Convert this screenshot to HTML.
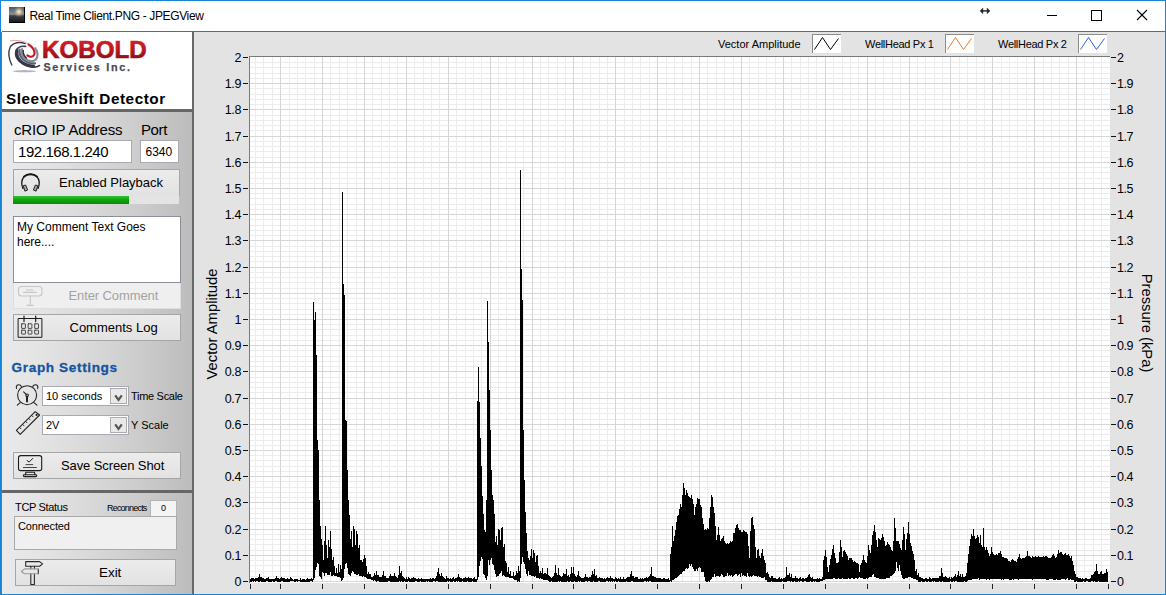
<!DOCTYPE html>
<html><head><meta charset="utf-8"><title>Real Time Client</title>
<style>
*{box-sizing:border-box;margin:0;padding:0}
html,body{width:1166px;height:595px;overflow:hidden;background:#fff}
body{position:relative;font-family:"Liberation Sans",sans-serif;color:#000}
.abs{position:absolute}
#win{position:absolute;left:0;top:0;width:1166px;height:595px;border:1px solid #1883d7}
#win2{position:absolute;left:1px;top:32px;width:1px;height:562px;background:#3c7fca}
#title{position:absolute;left:29.5px;top:9px;font-size:12px;line-height:15px;letter-spacing:-0.36px;white-space:nowrap;color:#000}
#tline{position:absolute;left:2px;top:31px;width:1163px;height:1px;background:#696969}
#lp{position:absolute;left:2px;top:32px;width:190px;height:562px;background:linear-gradient(90deg,#eaeaea 0%,#e3e3e3 22%,#d8d8d8 48%,#cbcbcb 74%,#bcbcbc 100%)}
#hdr{position:absolute;left:2px;top:32px;width:190px;height:77px;background:#fff}
.hsep{position:absolute;left:2px;width:190px;height:3px;background:#666}
#vsep{position:absolute;left:192px;top:32px;width:2px;height:562px;background:#686868}
#ga{position:absolute;left:194px;top:32px;width:971px;height:562px;background:#e3e3e3}
.t{position:absolute;white-space:nowrap;line-height:1}
.inp{position:absolute;background:#fff;border:1px solid #a9a9b4}
.btn{position:absolute;border:1px solid #a6a6a6;background:linear-gradient(180deg,#ececec,#e2e2e2)}
.yl{position:absolute;left:200px;width:41px;text-align:right;letter-spacing:-0.4px;font-size:12.5px;line-height:16px;height:16px}
.yr{position:absolute;left:1117px;width:41px;text-align:left;letter-spacing:-0.4px;font-size:12.5px;line-height:16px;height:16px}
.tk{position:absolute;width:5px;height:1px;background:#111}
.bt{position:absolute;top:584px;width:1px;height:5px;background:#222}
.lg{position:absolute;top:34px;width:29px;height:19px;background:#fff;border-top:1px solid #8c8c8c;border-left:1px solid #8c8c8c}
</style></head><body>
<div id="win"></div><div id="win2"></div>
<!-- title bar -->
<svg class="abs" style="left:9px;top:7px" width="16" height="16" viewBox="0 0 16 16">
<defs><linearGradient id="sky" x1="0" y1="0" x2="0" y2="1"><stop offset="0" stop-color="#4b5a68"/><stop offset="0.45" stop-color="#8a8f92"/><stop offset="0.55" stop-color="#3a4048"/><stop offset="1" stop-color="#15161c"/></linearGradient>
<radialGradient id="sun" cx="0.62" cy="0.3" r="0.35"><stop offset="0" stop-color="#fff8d8"/><stop offset="0.4" stop-color="#d8c898" stop-opacity="0.8"/><stop offset="1" stop-color="#888" stop-opacity="0"/></radialGradient></defs>
<rect width="16" height="16" fill="url(#sky)"/><rect width="16" height="16" fill="url(#sun)"/><rect x="15" y="0" width="1" height="16" fill="#000"/><rect x="0" y="15" width="16" height="1" fill="#000"/></svg>
<div id="title">Real Time Client.PNG - JPEGView</div>
<svg class="abs" style="left:976px;top:4px" width="190" height="24" viewBox="976 4 190 24" fill="none" stroke="#000" stroke-width="1">
<path d="M980 10.9L982.9 8V13.8ZM990 10.9L987.1 8V13.8Z" fill="#222" stroke="#222" stroke-width="0.4"/><rect x="982" y="10.2" width="6" height="1.4" fill="#222" stroke="none"/>
<path d="M1047 15.5H1057"/>
<rect x="1091.5" y="10.5" width="10" height="10"/>
<path d="M1137 10L1147 20M1147 10L1137 20" stroke-width="1.1"/>
</svg>
<div id="tline"></div>

<!-- left panel -->
<div id="lp"></div>
<div id="hdr"></div>
<div class="hsep" style="top:109px"></div>
<div class="hsep" style="top:490px"></div>
<div id="vsep"></div>

<!-- logo -->
<svg class="abs" style="left:6px;top:38px" width="150" height="36" viewBox="6 38 150 36">
<defs><linearGradient id="kred" x1="0" y1="0" x2="0" y2="1"><stop offset="0" stop-color="#e0232e"/><stop offset="0.5" stop-color="#b8161f"/><stop offset="1" stop-color="#7d0c12"/></linearGradient><filter id="b1" x="-10%" y="-10%" width="120%" height="120%"><feGaussianBlur stdDeviation="0.35"/></filter></defs>
<g id="swirl" fill="none" stroke-linecap="round" filter="url(#b1)">
<ellipse cx="24.5" cy="71.2" rx="11.5" ry="1.1" fill="#9a9aaa" stroke="none" opacity="0.75"/>
<path d="M11.8 65C8.6 58.5 7.6 52.5 10.4 46.5C13.5 42.5 19.5 41.4 25.2 43.6" stroke="#3b3d4c" stroke-width="1.4"/>
<path d="M10.4 40.8C15 39.9 20.5 40.4 25.2 42.2C27 43 28.5 44 30 45.4" stroke="#d8424a" stroke-width="0.7" opacity="0.75"/>
<path d="M28.5 44.3C32.2 46.8 34.7 50.4 34.6 53.2C34.4 55.8 32.4 57 30.4 56.7C29.2 56.5 28.2 56 27.4 55.4" stroke="#c8141c" stroke-width="2.1"/>
<path d="M25.6 46.4C21 45.8 17.2 47.6 15.9 51.2C15 54.8 16.6 58.6 19.6 61.4C23.6 65 29 67 34 67.2C36.2 67.2 38 66.6 39.4 65.6" stroke="#3a3e50" stroke-width="1.7"/>
<path d="M17 50.6C16.2 54.6 17.6 58.3 20.6 61.1C24 64.1 28.5 65.9 33.4 66.2" stroke="#343849" stroke-width="3.2"/>
<path d="M19.6 49.6C19 53.4 20.4 56.8 23.2 59.5C26.3 62.2 30.5 63.7 35 63.4" stroke="#5d6072" stroke-width="2.2"/>
<path d="M22 49C21 52.6 22.2 55.8 25 58.4C27.6 60.8 31 61.7 33.8 60.8C36.4 59.6 37.7 56.8 37.5 53.6C37.3 51.4 36.5 49.6 35.2 48.2" stroke="#878a9c" stroke-width="2.2"/>
<path d="M23.2 50.4C22.8 53.2 24 55.8 26.4 58" stroke="#2f3242" stroke-width="1.5"/>
</g>
<text x="42" y="58.2" font-family="Liberation Sans" font-weight="700" font-size="24.7" fill="url(#kred)" stroke="url(#kred)" stroke-width="0.7" textLength="104.6" lengthAdjust="spacingAndGlyphs">KOBOLD</text>
<text x="43.4" y="70.8" font-family="Liberation Sans" font-weight="700" font-size="10.8" fill="#4a4b57" stroke="#4a4b57" stroke-width="0.25" textLength="86.5" lengthAdjust="spacing">Services Inc.</text>
</svg>
<div class="t" style="left:6px;top:90.5px;font-size:15.3px;font-weight:700;letter-spacing:0.55px">SleeveShift Detector</div>

<div class="t" style="left:14px;top:122px;font-size:15px;letter-spacing:-0.15px">cRIO IP Address</div>
<div class="t" style="left:141px;top:122px;font-size:15px;letter-spacing:-0.4px">Port</div>
<div class="inp" style="left:13px;top:140px;width:119px;height:23px"></div>
<div class="t" style="left:18px;top:144px;font-size:15px;letter-spacing:-0.45px">192.168.1.240</div>
<div class="inp" style="left:140px;top:140px;width:39px;height:23px"></div>
<div class="t" style="left:145.5px;top:146px;font-size:12px">6340</div>

<div class="btn" style="left:13px;top:169px;width:167px;height:27px;border-bottom:none"></div>
<div class="t" style="left:59px;top:176px;font-size:13px">Enabled Playback</div>
<div class="abs" style="left:13px;top:196px;width:166px;height:8px;background:#e4e4e4"></div>
<div class="abs" style="left:13px;top:196px;width:116px;height:8px;background:linear-gradient(180deg,#2fc42f 0%,#12a512 45%,#0a8a0a 100%)"></div>

<div class="inp" style="left:13px;top:216px;width:168px;height:67px;border-color:#8e8e99"></div>
<div class="t" style="left:17px;top:220px;font-size:12px;line-height:15px">My Comment Text Goes<br>here....</div>
<div class="abs" style="left:13px;top:283px;width:168px;height:26px;background:#efefef;border:1px solid #dedede;border-top:none"></div>
<div class="t" style="left:68.5px;top:288.5px;font-size:13px;color:#a3a3a3;letter-spacing:-0.1px">Enter Comment</div>

<div class="btn" style="left:13px;top:314px;width:168px;height:27px"></div>
<div class="t" style="left:69.5px;top:320.5px;font-size:13px">Comments Log</div>

<div class="t" style="left:11.6px;top:360.6px;font-size:13.6px;font-weight:700;color:#1454a2;letter-spacing:0.62px;-webkit-text-stroke:0.3px #1454a2">Graph Settings</div>

<div class="inp" style="left:42px;top:386px;width:87px;height:20px"></div>
<div class="abs" style="left:110px;top:388px;width:17px;height:16px;background:#e9e9e9;border:1px solid #adadad"></div>
<div class="t" style="left:46px;top:391px;font-size:11px">10 seconds</div>
<div class="t" style="left:131px;top:391px;font-size:11px;letter-spacing:-0.3px">Time Scale</div>
<div class="inp" style="left:42px;top:415px;width:87px;height:20px"></div>
<div class="abs" style="left:110px;top:417px;width:17px;height:16px;background:#e9e9e9;border:1px solid #adadad"></div>
<div class="t" style="left:46px;top:420px;font-size:11px">2V</div>
<div class="t" style="left:131px;top:420px;font-size:11px">Y Scale</div>

<div class="btn" style="left:13px;top:452px;width:168px;height:27px"></div>
<div class="t" style="left:61px;top:458.5px;font-size:13px;letter-spacing:-0.1px">Save Screen Shot</div>

<div class="t" style="left:15px;top:502px;font-size:11px;letter-spacing:-0.33px">TCP Status</div>
<div class="t" style="left:107px;top:504px;font-size:9px;letter-spacing:-0.8px">Reconnects</div>
<div class="abs" style="left:150px;top:500px;width:27px;height:17px;background:#f4f4f4;border:1px solid #b4b4b4"></div>
<div class="t" style="left:161px;top:504px;font-size:9px">0</div>
<div class="abs" style="left:14px;top:516px;width:163px;height:34px;background:#f0f0f0;border:1px solid #a9a9a9"></div>
<div class="t" style="left:18px;top:521px;font-size:11px;letter-spacing:-0.17px">Connected</div>

<div class="btn" style="left:15px;top:559px;width:161px;height:27px"></div>
<div class="t" style="left:99px;top:565.5px;font-size:13.4px">Exit</div>

<!-- icons -->
<svg class="abs" style="left:0;top:0;pointer-events:none" width="200" height="595" viewBox="0 0 200 595" fill="none" stroke="#222" stroke-width="1.1" stroke-linecap="round" stroke-linejoin="round" id="icons">
<!-- headphones -->
<path d="M22.9 188.4C21.2 184 21.4 179.6 24.2 176.5C27.5 173.2 33.5 173.2 36.8 176.5C39.6 179.6 39.8 184 38.1 188.4" stroke="#1a1a1a" stroke-width="1.3"/>
<path d="M24 176.6C27.4 173.3 33.6 173.3 37 176.6" stroke="#1a1a1a" stroke-width="2"/>
<path d="M23.6 185.6L25.6 185L27.6 190L25.4 190.9Z" stroke="#222" stroke-width="1" fill="#aaa"/>
<path d="M37.4 185.6L35.4 185L33.4 190L35.6 190.9Z" stroke="#222" stroke-width="1" fill="#aaa"/>
<path d="M22.9 186.3L24.9 191.2M38.1 186.3L36.1 191.2" stroke="#444" stroke-width="0.8"/>
<!-- enter comment sign (disabled) -->
<g stroke="#c6c6c6" stroke-width="1.1">
<rect x="18.5" y="286.5" width="23.5" height="9.5" rx="3" ry="3"/>
<path d="M26.4 290H33M23.6 292.4H36.2M30.3 296V305.2M27 305.4H33.2"/>
</g>
<!-- calendar -->
<g stroke="#1c1c1c" stroke-width="1">
<rect x="18.5" y="318.5" width="23.4" height="18.8"/>
<path d="M24 316V321.6M35.7 316V321.6" stroke-width="1.2"/>
</g>
<g stroke="#4a4a4a" stroke-width="1">
<rect x="21.6" y="323.8" width="3.8" height="4.6" rx="0.3"/><rect x="28.1" y="323.8" width="3.8" height="4.6" rx="0.3"/><rect x="34.7" y="323.8" width="3.8" height="4.6" rx="0.3"/>
<rect x="21.6" y="330.2" width="3.8" height="3.9" rx="0.3"/><rect x="28.1" y="330.2" width="3.8" height="3.9" rx="0.3"/><rect x="34.7" y="330.2" width="3.8" height="3.9" rx="0.3"/>
</g>
<!-- clock -->
<g stroke="#222" stroke-width="1.1">
<circle cx="27.1" cy="395.2" r="9.5"/>
<path d="M16.6 388.6C15.6 386.6 17 384.6 19 384.8C20.3 384.9 21 385.6 21.4 386.4M37.6 388.6C38.6 386.6 37.2 384.6 35.2 384.8C33.9 384.9 33.2 385.6 32.8 386.4"/>
<path d="M20.2 402.7L17.3 405.2M34 402.7L36.9 405.2"/>
<circle cx="27.1" cy="395.3" r="1.3"/>
<path d="M26.2 394.3L23.6 391.8"/>
<path d="M27 396.8V401.6" stroke-width="2"/>
</g>
<!-- ruler -->
<g stroke="#222" stroke-width="1.1">
<path d="M35.2 411.6L39.6 415L20.2 434.3L16.4 430.4Z"/>
<path d="M19.6 427.4L21 428.8M22.6 424.4L24 425.8M25.6 421.4L27 422.8M28.6 418.4L30 419.8M31.6 415.4L33 416.8" stroke-width="0.9"/>
<circle cx="36.6" cy="414.9" r="0.5" fill="#222"/>
</g>
<!-- monitor -->
<g stroke="#1c1c1c" stroke-width="1.1">
<rect x="18.5" y="455.6" width="23.2" height="15" rx="2.2"/>
<path d="M27.1 460.5L29.1 462.1L32.8 458.4" stroke-width="1"/>
<path d="M26 464.6H32.8M23.3 467.5H36.4" stroke="#444" stroke-width="1"/>
<path d="M25.8 472.2H34.6M26 472.2L25.4 474.6M34.4 472.2L35 474.6"/>
<rect x="23.4" y="474.7" width="13.3" height="1.9" rx="0.9"/>
</g>
<!-- signpost -->
<g stroke="#2a2a2a" stroke-width="1.1">
<path d="M25.7 561.6H39.6L42.6 563.9L39.6 566.3H25.7Z"/>
<path d="M38.3 569V573.7" />
<path d="M30.8 566.4V568.8M34.4 566.4V568.8M30.8 573.8V584.5H34.4V573.8"/>
</g>
<g stroke="#9a9a9a" stroke-width="1.1"><path d="M38.3 568.9H24.6L21.3 571.5L24.6 573.8H38.3"/></g>
<!-- chevrons -->
<g stroke="#555" stroke-width="2.2" stroke-linecap="butt" stroke-linejoin="miter">
<path d="M115.2 395.3L118.5 399.8L121.8 395.3"/>
<path d="M115.2 424.3L118.5 428.8L121.8 424.3"/>
</g>
</svg>

<!-- graph area -->
<div id="ga"></div>
<div class="t" style="left:718px;top:39px;font-size:11px">Vector Amplitude</div>
<div class="lg" style="left:812px"></div>
<div class="t" style="left:865px;top:39px;font-size:11px;letter-spacing:-0.3px">WellHead Px 1</div>
<div class="lg" style="left:945px"></div>
<div class="t" style="left:998px;top:39px;font-size:11px;letter-spacing:-0.3px">WellHead Px 2</div>
<div class="lg" style="left:1078px"></div>
<svg class="abs" style="left:800px;top:30px" width="320" height="28" viewBox="800 30 320 28" fill="none" stroke-width="1">
<path d="M814.5 49.5L822.5 37.5L830.5 49.5L838.5 38.5" stroke="#000"/>
<path d="M947.5 49.5L955.5 37.5L963.5 49.5L971.5 38.5" stroke="#f07828"/>
<path d="M1080.5 49.5L1088.5 37.5L1096.5 49.5L1104.5 38.5" stroke="#2a64e8"/>
</svg>

<div class="abs" style="left:249px;top:56px;width:861px;height:527px;background:#fff;border-left:1px solid #7a7a7a;border-top:1px solid #7a7a7a"></div>
<svg class="abs" style="left:0;top:0" width="1166" height="595" viewBox="0 0 1166 595" shape-rendering="crispEdges">
<rect x="250" y="62" width="860" height="1" fill="#ececec"/><rect x="250" y="67" width="860" height="1" fill="#ececec"/><rect x="250" y="73" width="860" height="1" fill="#ececec"/><rect x="250" y="78" width="860" height="1" fill="#ececec"/><rect x="250" y="83" width="860" height="1" fill="#d6d6d6"/><rect x="250" y="88" width="860" height="1" fill="#ececec"/><rect x="250" y="94" width="860" height="1" fill="#ececec"/><rect x="250" y="99" width="860" height="1" fill="#ececec"/><rect x="250" y="104" width="860" height="1" fill="#ececec"/><rect x="250" y="109" width="860" height="1" fill="#d6d6d6"/><rect x="250" y="115" width="860" height="1" fill="#ececec"/><rect x="250" y="120" width="860" height="1" fill="#ececec"/><rect x="250" y="125" width="860" height="1" fill="#ececec"/><rect x="250" y="130" width="860" height="1" fill="#ececec"/><rect x="250" y="136" width="860" height="1" fill="#d6d6d6"/><rect x="250" y="141" width="860" height="1" fill="#ececec"/><rect x="250" y="146" width="860" height="1" fill="#ececec"/><rect x="250" y="151" width="860" height="1" fill="#ececec"/><rect x="250" y="157" width="860" height="1" fill="#ececec"/><rect x="250" y="162" width="860" height="1" fill="#d6d6d6"/><rect x="250" y="167" width="860" height="1" fill="#ececec"/><rect x="250" y="172" width="860" height="1" fill="#ececec"/><rect x="250" y="178" width="860" height="1" fill="#ececec"/><rect x="250" y="183" width="860" height="1" fill="#ececec"/><rect x="250" y="188" width="860" height="1" fill="#d6d6d6"/><rect x="250" y="193" width="860" height="1" fill="#ececec"/><rect x="250" y="198" width="860" height="1" fill="#ececec"/><rect x="250" y="204" width="860" height="1" fill="#ececec"/><rect x="250" y="209" width="860" height="1" fill="#ececec"/><rect x="250" y="214" width="860" height="1" fill="#d6d6d6"/><rect x="250" y="219" width="860" height="1" fill="#ececec"/><rect x="250" y="225" width="860" height="1" fill="#ececec"/><rect x="250" y="230" width="860" height="1" fill="#ececec"/><rect x="250" y="235" width="860" height="1" fill="#ececec"/><rect x="250" y="240" width="860" height="1" fill="#d6d6d6"/><rect x="250" y="246" width="860" height="1" fill="#ececec"/><rect x="250" y="251" width="860" height="1" fill="#ececec"/><rect x="250" y="256" width="860" height="1" fill="#ececec"/><rect x="250" y="261" width="860" height="1" fill="#ececec"/><rect x="250" y="267" width="860" height="1" fill="#d6d6d6"/><rect x="250" y="272" width="860" height="1" fill="#ececec"/><rect x="250" y="277" width="860" height="1" fill="#ececec"/><rect x="250" y="282" width="860" height="1" fill="#ececec"/><rect x="250" y="288" width="860" height="1" fill="#ececec"/><rect x="250" y="293" width="860" height="1" fill="#d6d6d6"/><rect x="250" y="298" width="860" height="1" fill="#ececec"/><rect x="250" y="303" width="860" height="1" fill="#ececec"/><rect x="250" y="309" width="860" height="1" fill="#ececec"/><rect x="250" y="314" width="860" height="1" fill="#ececec"/><rect x="250" y="319" width="860" height="1" fill="#d6d6d6"/><rect x="250" y="324" width="860" height="1" fill="#ececec"/><rect x="250" y="329" width="860" height="1" fill="#ececec"/><rect x="250" y="335" width="860" height="1" fill="#ececec"/><rect x="250" y="340" width="860" height="1" fill="#ececec"/><rect x="250" y="345" width="860" height="1" fill="#d6d6d6"/><rect x="250" y="350" width="860" height="1" fill="#ececec"/><rect x="250" y="356" width="860" height="1" fill="#ececec"/><rect x="250" y="361" width="860" height="1" fill="#ececec"/><rect x="250" y="366" width="860" height="1" fill="#ececec"/><rect x="250" y="371" width="860" height="1" fill="#d6d6d6"/><rect x="250" y="377" width="860" height="1" fill="#ececec"/><rect x="250" y="382" width="860" height="1" fill="#ececec"/><rect x="250" y="387" width="860" height="1" fill="#ececec"/><rect x="250" y="392" width="860" height="1" fill="#ececec"/><rect x="250" y="398" width="860" height="1" fill="#d6d6d6"/><rect x="250" y="403" width="860" height="1" fill="#ececec"/><rect x="250" y="408" width="860" height="1" fill="#ececec"/><rect x="250" y="413" width="860" height="1" fill="#ececec"/><rect x="250" y="419" width="860" height="1" fill="#ececec"/><rect x="250" y="424" width="860" height="1" fill="#d6d6d6"/><rect x="250" y="429" width="860" height="1" fill="#ececec"/><rect x="250" y="434" width="860" height="1" fill="#ececec"/><rect x="250" y="440" width="860" height="1" fill="#ececec"/><rect x="250" y="445" width="860" height="1" fill="#ececec"/><rect x="250" y="450" width="860" height="1" fill="#d6d6d6"/><rect x="250" y="455" width="860" height="1" fill="#ececec"/><rect x="250" y="460" width="860" height="1" fill="#ececec"/><rect x="250" y="466" width="860" height="1" fill="#ececec"/><rect x="250" y="471" width="860" height="1" fill="#ececec"/><rect x="250" y="476" width="860" height="1" fill="#d6d6d6"/><rect x="250" y="481" width="860" height="1" fill="#ececec"/><rect x="250" y="487" width="860" height="1" fill="#ececec"/><rect x="250" y="492" width="860" height="1" fill="#ececec"/><rect x="250" y="497" width="860" height="1" fill="#ececec"/><rect x="250" y="502" width="860" height="1" fill="#d6d6d6"/><rect x="250" y="508" width="860" height="1" fill="#ececec"/><rect x="250" y="513" width="860" height="1" fill="#ececec"/><rect x="250" y="518" width="860" height="1" fill="#ececec"/><rect x="250" y="523" width="860" height="1" fill="#ececec"/><rect x="250" y="529" width="860" height="1" fill="#d6d6d6"/><rect x="250" y="534" width="860" height="1" fill="#ececec"/><rect x="250" y="539" width="860" height="1" fill="#ececec"/><rect x="250" y="544" width="860" height="1" fill="#ececec"/><rect x="250" y="550" width="860" height="1" fill="#ececec"/><rect x="250" y="555" width="860" height="1" fill="#d6d6d6"/><rect x="250" y="560" width="860" height="1" fill="#ececec"/><rect x="250" y="565" width="860" height="1" fill="#ececec"/><rect x="250" y="571" width="860" height="1" fill="#ececec"/><rect x="250" y="576" width="860" height="1" fill="#ececec"/><rect x="250" y="581" width="860" height="1" fill="#d6d6d6"/><rect x="255" y="57" width="1" height="525" fill="#ececec"/><rect x="263" y="57" width="1" height="525" fill="#ececec"/><rect x="272" y="57" width="1" height="525" fill="#ececec"/><rect x="289" y="57" width="1" height="525" fill="#ececec"/><rect x="297" y="57" width="1" height="525" fill="#ececec"/><rect x="305" y="57" width="1" height="525" fill="#ececec"/><rect x="314" y="57" width="1" height="525" fill="#ececec"/><rect x="330" y="57" width="1" height="525" fill="#ececec"/><rect x="339" y="57" width="1" height="525" fill="#ececec"/><rect x="347" y="57" width="1" height="525" fill="#ececec"/><rect x="356" y="57" width="1" height="525" fill="#ececec"/><rect x="372" y="57" width="1" height="525" fill="#ececec"/><rect x="381" y="57" width="1" height="525" fill="#ececec"/><rect x="389" y="57" width="1" height="525" fill="#ececec"/><rect x="397" y="57" width="1" height="525" fill="#ececec"/><rect x="414" y="57" width="1" height="525" fill="#ececec"/><rect x="423" y="57" width="1" height="525" fill="#ececec"/><rect x="431" y="57" width="1" height="525" fill="#ececec"/><rect x="439" y="57" width="1" height="525" fill="#ececec"/><rect x="456" y="57" width="1" height="525" fill="#ececec"/><rect x="465" y="57" width="1" height="525" fill="#ececec"/><rect x="473" y="57" width="1" height="525" fill="#ececec"/><rect x="481" y="57" width="1" height="525" fill="#ececec"/><rect x="498" y="57" width="1" height="525" fill="#ececec"/><rect x="506" y="57" width="1" height="525" fill="#ececec"/><rect x="515" y="57" width="1" height="525" fill="#ececec"/><rect x="523" y="57" width="1" height="525" fill="#ececec"/><rect x="540" y="57" width="1" height="525" fill="#ececec"/><rect x="548" y="57" width="1" height="525" fill="#ececec"/><rect x="557" y="57" width="1" height="525" fill="#ececec"/><rect x="565" y="57" width="1" height="525" fill="#ececec"/><rect x="582" y="57" width="1" height="525" fill="#ececec"/><rect x="590" y="57" width="1" height="525" fill="#ececec"/><rect x="599" y="57" width="1" height="525" fill="#ececec"/><rect x="607" y="57" width="1" height="525" fill="#ececec"/><rect x="624" y="57" width="1" height="525" fill="#ececec"/><rect x="632" y="57" width="1" height="525" fill="#ececec"/><rect x="640" y="57" width="1" height="525" fill="#ececec"/><rect x="649" y="57" width="1" height="525" fill="#ececec"/><rect x="666" y="57" width="1" height="525" fill="#ececec"/><rect x="674" y="57" width="1" height="525" fill="#ececec"/><rect x="682" y="57" width="1" height="525" fill="#ececec"/><rect x="691" y="57" width="1" height="525" fill="#ececec"/><rect x="707" y="57" width="1" height="525" fill="#ececec"/><rect x="716" y="57" width="1" height="525" fill="#ececec"/><rect x="724" y="57" width="1" height="525" fill="#ececec"/><rect x="733" y="57" width="1" height="525" fill="#ececec"/><rect x="749" y="57" width="1" height="525" fill="#ececec"/><rect x="758" y="57" width="1" height="525" fill="#ececec"/><rect x="766" y="57" width="1" height="525" fill="#ececec"/><rect x="775" y="57" width="1" height="525" fill="#ececec"/><rect x="791" y="57" width="1" height="525" fill="#ececec"/><rect x="800" y="57" width="1" height="525" fill="#ececec"/><rect x="808" y="57" width="1" height="525" fill="#ececec"/><rect x="816" y="57" width="1" height="525" fill="#ececec"/><rect x="833" y="57" width="1" height="525" fill="#ececec"/><rect x="842" y="57" width="1" height="525" fill="#ececec"/><rect x="850" y="57" width="1" height="525" fill="#ececec"/><rect x="858" y="57" width="1" height="525" fill="#ececec"/><rect x="875" y="57" width="1" height="525" fill="#ececec"/><rect x="883" y="57" width="1" height="525" fill="#ececec"/><rect x="892" y="57" width="1" height="525" fill="#ececec"/><rect x="900" y="57" width="1" height="525" fill="#ececec"/><rect x="917" y="57" width="1" height="525" fill="#ececec"/><rect x="925" y="57" width="1" height="525" fill="#ececec"/><rect x="934" y="57" width="1" height="525" fill="#ececec"/><rect x="942" y="57" width="1" height="525" fill="#ececec"/><rect x="959" y="57" width="1" height="525" fill="#ececec"/><rect x="967" y="57" width="1" height="525" fill="#ececec"/><rect x="976" y="57" width="1" height="525" fill="#ececec"/><rect x="984" y="57" width="1" height="525" fill="#ececec"/><rect x="1001" y="57" width="1" height="525" fill="#ececec"/><rect x="1009" y="57" width="1" height="525" fill="#ececec"/><rect x="1017" y="57" width="1" height="525" fill="#ececec"/><rect x="1026" y="57" width="1" height="525" fill="#ececec"/><rect x="1043" y="57" width="1" height="525" fill="#ececec"/><rect x="1051" y="57" width="1" height="525" fill="#ececec"/><rect x="1059" y="57" width="1" height="525" fill="#ececec"/><rect x="1068" y="57" width="1" height="525" fill="#ececec"/><rect x="1084" y="57" width="1" height="525" fill="#ececec"/><rect x="1093" y="57" width="1" height="525" fill="#ececec"/><rect x="1101" y="57" width="1" height="525" fill="#ececec"/><rect x="280" y="57" width="1" height="525" fill="#d6d6d6"/><rect x="322" y="57" width="1" height="525" fill="#d6d6d6"/><rect x="364" y="57" width="1" height="525" fill="#d6d6d6"/><rect x="406" y="57" width="1" height="525" fill="#d6d6d6"/><rect x="448" y="57" width="1" height="525" fill="#d6d6d6"/><rect x="490" y="57" width="1" height="525" fill="#d6d6d6"/><rect x="532" y="57" width="1" height="525" fill="#d6d6d6"/><rect x="573" y="57" width="1" height="525" fill="#d6d6d6"/><rect x="615" y="57" width="1" height="525" fill="#d6d6d6"/><rect x="657" y="57" width="1" height="525" fill="#d6d6d6"/><rect x="699" y="57" width="1" height="525" fill="#d6d6d6"/><rect x="741" y="57" width="1" height="525" fill="#d6d6d6"/><rect x="783" y="57" width="1" height="525" fill="#d6d6d6"/><rect x="825" y="57" width="1" height="525" fill="#d6d6d6"/><rect x="867" y="57" width="1" height="525" fill="#d6d6d6"/><rect x="909" y="57" width="1" height="525" fill="#d6d6d6"/><rect x="950" y="57" width="1" height="525" fill="#d6d6d6"/><rect x="992" y="57" width="1" height="525" fill="#d6d6d6"/><rect x="1034" y="57" width="1" height="525" fill="#d6d6d6"/><rect x="1076" y="57" width="1" height="525" fill="#d6d6d6"/><rect x="250" y="83" width="860" height="1" fill="#d6d6d6"/><rect x="250" y="109" width="860" height="1" fill="#d6d6d6"/><rect x="250" y="136" width="860" height="1" fill="#d6d6d6"/><rect x="250" y="162" width="860" height="1" fill="#d6d6d6"/><rect x="250" y="188" width="860" height="1" fill="#d6d6d6"/><rect x="250" y="214" width="860" height="1" fill="#d6d6d6"/><rect x="250" y="240" width="860" height="1" fill="#d6d6d6"/><rect x="250" y="267" width="860" height="1" fill="#d6d6d6"/><rect x="250" y="293" width="860" height="1" fill="#d6d6d6"/><rect x="250" y="319" width="860" height="1" fill="#d6d6d6"/><rect x="250" y="345" width="860" height="1" fill="#d6d6d6"/><rect x="250" y="371" width="860" height="1" fill="#d6d6d6"/><rect x="250" y="398" width="860" height="1" fill="#d6d6d6"/><rect x="250" y="424" width="860" height="1" fill="#d6d6d6"/><rect x="250" y="450" width="860" height="1" fill="#d6d6d6"/><rect x="250" y="476" width="860" height="1" fill="#d6d6d6"/><rect x="250" y="502" width="860" height="1" fill="#d6d6d6"/><rect x="250" y="529" width="860" height="1" fill="#d6d6d6"/><rect x="250" y="555" width="860" height="1" fill="#d6d6d6"/><rect x="250" y="581" width="860" height="1" fill="#d6d6d6"/>
<path d="M250.0 578.5L250.0 578.5 L251.0 578.5L251.0 578.0 L252.0 578.0L252.0 577.9 L253.0 577.9L253.0 577.5 L254.0 577.5L254.0 578.8 L255.0 578.8L255.0 578.4 L256.0 578.4L256.0 577.6 L257.0 577.6L257.0 578.1 L258.0 578.1L258.0 576.6 L259.0 576.6L259.0 574.0 L260.0 574.0L260.0 576.9 L261.0 576.9L261.0 577.0 L262.0 577.0L262.0 577.7 L263.0 577.7L263.0 578.1 L264.0 578.1L264.0 578.6 L265.0 578.6L265.0 578.5 L266.0 578.5L266.0 578.2 L267.0 578.2L267.0 578.4 L268.0 578.4L268.0 576.9 L269.0 576.9L269.0 578.6 L270.0 578.6L270.0 578.8 L271.0 578.8L271.0 578.5 L272.0 578.5L272.0 578.5 L273.0 578.5L273.0 578.9 L274.0 578.9L274.0 579.1 L275.0 579.1L275.0 577.6 L276.0 577.6L276.0 576.3 L277.0 576.3L277.0 578.1 L278.0 578.1L278.0 577.8 L279.0 577.8L279.0 578.7 L280.0 578.7L280.0 577.5 L281.0 577.5L281.0 577.2 L282.0 577.2L282.0 577.5 L283.0 577.5L283.0 578.3 L284.0 578.3L284.0 577.8 L285.0 577.8L285.0 578.8 L286.0 578.8L286.0 578.8 L287.0 578.8L287.0 578.2 L288.0 578.2L288.0 579.3 L289.0 579.3L289.0 578.8 L290.0 578.8L290.0 577.3 L291.0 577.3L291.0 577.9 L292.0 577.9L292.0 578.5 L293.0 578.5L293.0 579.5 L294.0 579.5L294.0 578.7 L295.0 578.7L295.0 578.6 L296.0 578.6L296.0 579.1 L297.0 579.1L297.0 578.6 L298.0 578.6L298.0 579.6 L299.0 579.6L299.0 579.8 L300.0 579.8L300.0 577.9 L301.0 577.9L301.0 579.7 L302.0 579.7L302.0 579.0 L303.0 579.0L303.0 579.2 L304.0 579.2L304.0 578.7 L305.0 578.7L305.0 579.5 L306.0 579.5L306.0 579.3 L307.0 579.3L307.0 577.9 L308.0 577.9L308.0 578.6 L309.0 578.6L309.0 578.8 L310.0 578.8L310.0 579.4 L311.0 579.4L311.0 578.4 L312.0 578.4L312.0 578.9 L313.0 578.9L313.0 302.0 L314.0 302.0L314.0 320.0 L315.0 320.0L315.0 312.0 L316.0 312.0L316.0 355.0 L317.0 355.0L317.0 440.0 L318.0 440.0L318.0 450.0 L319.0 450.0L319.0 500.0 L320.0 500.0L320.0 525.5 L321.0 525.5L321.0 538.8 L322.0 538.8L322.0 544.6 L323.0 544.6L323.0 560.0 L324.0 560.0L324.0 541.0 L325.0 541.0L325.0 525.9 L326.0 525.9L326.0 544.5 L327.0 544.5L327.0 557.8 L328.0 557.8L328.0 540.4 L329.0 540.4L329.0 546.8 L330.0 546.8L330.0 531.4 L331.0 531.4L331.0 549.4 L332.0 549.4L332.0 559.9 L333.0 559.9L333.0 556.5 L334.0 556.5L334.0 565.6 L335.0 565.6L335.0 572.9 L336.0 572.9L336.0 568.4 L337.0 568.4L337.0 572.6 L338.0 572.6L338.0 563.7 L339.0 563.7L339.0 571.7 L340.0 571.7L340.0 565.4 L341.0 565.4L341.0 568.9 L342.0 568.9L342.0 192.0 L343.0 192.0L343.0 284.0 L344.0 284.0L344.0 295.0 L345.0 295.0L345.0 420.0 L346.0 420.0L346.0 421.0 L347.0 421.0L347.0 470.0 L348.0 470.0L348.0 500.0 L349.0 500.0L349.0 514.5 L350.0 514.5L350.0 538.7 L351.0 538.7L351.0 531.1 L352.0 531.1L352.0 546.8 L353.0 546.8L353.0 525.6 L354.0 525.6L354.0 528.6 L355.0 528.6L355.0 544.7 L356.0 544.7L356.0 531.4 L357.0 531.4L357.0 534.1 L358.0 534.1L358.0 547.5 L359.0 547.5L359.0 545.1 L360.0 545.1L360.0 559.5 L361.0 559.5L361.0 560.2 L362.0 560.2L362.0 561.7 L363.0 561.7L363.0 559.0 L364.0 559.0L364.0 555.4 L365.0 555.4L365.0 557.6 L366.0 557.6L366.0 566.1 L367.0 566.1L367.0 573.5 L368.0 573.5L368.0 571.6 L369.0 571.6L369.0 574.3 L370.0 574.3L370.0 573.6 L371.0 573.6L371.0 576.6 L372.0 576.6L372.0 576.8 L373.0 576.8L373.0 575.6 L374.0 575.6L374.0 573.3 L375.0 573.3L375.0 575.2 L376.0 575.2L376.0 570.7 L377.0 570.7L377.0 575.4 L378.0 575.4L378.0 575.1 L379.0 575.1L379.0 576.8 L380.0 576.8L380.0 577.3 L381.0 577.3L381.0 576.7 L382.0 576.7L382.0 574.8 L383.0 574.8L383.0 571.0 L384.0 571.0L384.0 576.4 L385.0 576.4L385.0 576.3 L386.0 576.3L386.0 577.8 L387.0 577.8L387.0 577.8 L388.0 577.8L388.0 577.8 L389.0 577.8L389.0 576.1 L390.0 576.1L390.0 574.4 L391.0 574.4L391.0 576.3 L392.0 576.3L392.0 576.4 L393.0 576.4L393.0 575.9 L394.0 575.9L394.0 573.0 L395.0 573.0L395.0 576.0 L396.0 576.0L396.0 577.0 L397.0 577.0L397.0 577.7 L398.0 577.7L398.0 575.4 L399.0 575.4L399.0 566.0 L400.0 566.0L400.0 573.2 L401.0 573.2L401.0 570.8 L402.0 570.8L402.0 575.9 L403.0 575.9L403.0 577.0 L404.0 577.0L404.0 577.7 L405.0 577.7L405.0 578.6 L406.0 578.6L406.0 577.4 L407.0 577.4L407.0 578.7 L408.0 578.7L408.0 577.4 L409.0 577.4L409.0 578.3 L410.0 578.3L410.0 578.9 L411.0 578.9L411.0 578.4 L412.0 578.4L412.0 578.1 L413.0 578.1L413.0 576.5 L414.0 576.5L414.0 578.2 L415.0 578.2L415.0 578.3 L416.0 578.3L416.0 578.8 L417.0 578.8L417.0 579.1 L418.0 579.1L418.0 578.3 L419.0 578.3L419.0 579.3 L420.0 579.3L420.0 578.7 L421.0 578.7L421.0 578.2 L422.0 578.2L422.0 579.2 L423.0 579.2L423.0 578.6 L424.0 578.6L424.0 579.1 L425.0 579.1L425.0 578.7 L426.0 578.7L426.0 578.6 L427.0 578.6L427.0 578.8 L428.0 578.8L428.0 578.7 L429.0 578.7L429.0 579.0 L430.0 579.0L430.0 578.2 L431.0 578.2L431.0 579.1 L432.0 579.1L432.0 578.2 L433.0 578.2L433.0 577.9 L434.0 577.9L434.0 578.7 L435.0 578.7L435.0 578.3 L436.0 578.3L436.0 576.2 L437.0 576.2L437.0 571.6 L438.0 571.6L438.0 568.0 L439.0 568.0L439.0 574.3 L440.0 574.3L440.0 576.0 L441.0 576.0L441.0 572.6 L442.0 572.6L442.0 576.2 L443.0 576.2L443.0 577.2 L444.0 577.2L444.0 577.5 L445.0 577.5L445.0 578.6 L446.0 578.6L446.0 575.5 L447.0 575.5L447.0 578.1 L448.0 578.1L448.0 578.1 L449.0 578.1L449.0 578.8 L450.0 578.8L450.0 577.8 L451.0 577.8L451.0 578.5 L452.0 578.5L452.0 578.4 L453.0 578.4L453.0 576.6 L454.0 576.6L454.0 578.8 L455.0 578.8L455.0 577.6 L456.0 577.6L456.0 578.0 L457.0 578.0L457.0 576.8 L458.0 576.8L458.0 573.6 L459.0 573.6L459.0 576.9 L460.0 576.9L460.0 577.9 L461.0 577.9L461.0 577.7 L462.0 577.7L462.0 578.5 L463.0 578.5L463.0 578.3 L464.0 578.3L464.0 577.9 L465.0 577.9L465.0 576.7 L466.0 576.7L466.0 578.3 L467.0 578.3L467.0 578.0 L468.0 578.0L468.0 577.4 L469.0 577.4L469.0 577.6 L470.0 577.6L470.0 577.5 L471.0 577.5L471.0 577.8 L472.0 577.8L472.0 578.6 L473.0 578.6L473.0 578.3 L474.0 578.3L474.0 577.2 L475.0 577.2L475.0 579.1 L476.0 579.1L476.0 579.4 L477.0 579.4L477.0 401.0 L478.0 401.0L478.0 367.0 L479.0 367.0L479.0 402.0 L480.0 402.0L480.0 438.0 L481.0 438.0L481.0 466.0 L482.0 466.0L482.0 496.0 L483.0 496.0L483.0 513.9 L484.0 513.9L484.0 530.4 L485.0 530.4L485.0 532.4 L486.0 532.4L486.0 500.0 L487.0 500.0L487.0 301.0 L488.0 301.0L488.0 342.0 L489.0 342.0L489.0 390.0 L490.0 390.0L490.0 430.0 L491.0 430.0L491.0 470.0 L492.0 470.0L492.0 495.0 L493.0 495.0L493.0 500.0 L494.0 500.0L494.0 514.4 L495.0 514.4L495.0 542.1 L496.0 542.1L496.0 535.8 L497.0 535.8L497.0 544.5 L498.0 544.5L498.0 529.4 L499.0 529.4L499.0 530.0 L500.0 530.0L500.0 540.2 L501.0 540.2L501.0 527.6 L502.0 527.6L502.0 527.2 L503.0 527.2L503.0 547.3 L504.0 547.3L504.0 544.1 L505.0 544.1L505.0 560.6 L506.0 560.6L506.0 563.2 L507.0 563.2L507.0 571.9 L508.0 571.9L508.0 566.6 L509.0 566.6L509.0 573.9 L510.0 573.9L510.0 570.9 L511.0 570.9L511.0 575.6 L512.0 575.6L512.0 575.5 L513.0 575.5L513.0 571.6 L514.0 571.6L514.0 575.6 L515.0 575.6L515.0 574.6 L516.0 574.6L516.0 571.3 L517.0 571.3L517.0 572.8 L518.0 572.8L518.0 565.5 L519.0 565.5L519.0 570.6 L520.0 570.6L520.0 170.0 L521.0 170.0L521.0 269.0 L522.0 269.0L522.0 300.0 L523.0 300.0L523.0 430.0 L524.0 430.0L524.0 480.0 L525.0 480.0L525.0 511.9 L526.0 511.9L526.0 532.5 L527.0 532.5L527.0 550.5 L528.0 550.5L528.0 557.9 L529.0 557.9L529.0 560.4 L530.0 560.4L530.0 555.9 L531.0 555.9L531.0 549.2 L532.0 549.2L532.0 558.0 L533.0 558.0L533.0 549.8 L534.0 549.8L534.0 552.6 L535.0 552.6L535.0 561.5 L536.0 561.5L536.0 556.4 L537.0 556.4L537.0 554.8 L538.0 554.8L538.0 566.0 L539.0 566.0L539.0 573.1 L540.0 573.1L540.0 571.1 L541.0 571.1L541.0 572.5 L542.0 572.5L542.0 568.4 L543.0 568.4L543.0 574.0 L544.0 574.0L544.0 573.0 L545.0 573.0L545.0 572.6 L546.0 572.6L546.0 574.2 L547.0 574.2L547.0 567.7 L548.0 567.7L548.0 574.7 L549.0 574.7L549.0 575.8 L550.0 575.8L550.0 576.8 L551.0 576.8L551.0 577.8 L552.0 577.8L552.0 577.4 L553.0 577.4L553.0 576.2 L554.0 576.2L554.0 573.1 L555.0 573.1L555.0 565.1 L556.0 565.1L556.0 573.0 L557.0 573.0L557.0 575.0 L558.0 575.0L558.0 568.0 L559.0 568.0L559.0 574.8 L560.0 574.8L560.0 576.0 L561.0 576.0L561.0 577.1 L562.0 577.1L562.0 576.4 L563.0 576.4L563.0 573.2 L564.0 573.2L564.0 574.4 L565.0 574.4L565.0 573.9 L566.0 573.9L566.0 568.8 L567.0 568.8L567.0 576.1 L568.0 576.1L568.0 574.7 L569.0 574.7L569.0 576.7 L570.0 576.7L570.0 574.4 L571.0 574.4L571.0 567.3 L572.0 567.3L572.0 572.9 L573.0 572.9L573.0 566.5 L574.0 566.5L574.0 573.9 L575.0 573.9L575.0 576.4 L576.0 576.4L576.0 577.1 L577.0 577.1L577.0 575.3 L578.0 575.3L578.0 570.6 L579.0 570.6L579.0 576.4 L580.0 576.4L580.0 576.6 L581.0 576.6L581.0 577.7 L582.0 577.7L582.0 578.1 L583.0 578.1L583.0 578.1 L584.0 578.1L584.0 576.7 L585.0 576.7L585.0 573.7 L586.0 573.7L586.0 576.9 L587.0 576.9L587.0 576.9 L588.0 576.9L588.0 577.7 L589.0 577.7L589.0 577.1 L590.0 577.1L590.0 577.2 L591.0 577.2L591.0 574.5 L592.0 574.5L592.0 571.3 L593.0 571.3L593.0 573.9 L594.0 573.9L594.0 568.5 L595.0 568.5L595.0 575.7 L596.0 575.7L596.0 575.4 L597.0 575.4L597.0 577.8 L598.0 577.8L598.0 578.2 L599.0 578.2L599.0 577.3 L600.0 577.3L600.0 578.1 L601.0 578.1L601.0 577.9 L602.0 577.9L602.0 577.9 L603.0 577.9L603.0 578.6 L604.0 578.6L604.0 578.2 L605.0 578.2L605.0 578.7 L606.0 578.7L606.0 578.3 L607.0 578.3L607.0 576.5 L608.0 576.5L608.0 577.5 L609.0 577.5L609.0 577.5 L610.0 577.5L610.0 576.2 L611.0 576.2L611.0 578.0 L612.0 578.0L612.0 578.2 L613.0 578.2L613.0 578.6 L614.0 578.6L614.0 578.5 L615.0 578.5L615.0 577.2 L616.0 577.2L616.0 577.6 L617.0 577.6L617.0 578.5 L618.0 578.5L618.0 578.2 L619.0 578.2L619.0 578.8 L620.0 578.8L620.0 577.3 L621.0 577.3L621.0 578.8 L622.0 578.8L622.0 579.1 L623.0 579.1L623.0 577.4 L624.0 577.4L624.0 579.0 L625.0 579.0L625.0 578.8 L626.0 578.8L626.0 577.6 L627.0 577.6L627.0 577.4 L628.0 577.4L628.0 577.0 L629.0 577.0L629.0 577.1 L630.0 577.1L630.0 573.8 L631.0 573.8L631.0 571.4 L632.0 571.4L632.0 576.2 L633.0 576.2L633.0 575.9 L634.0 575.9L634.0 577.6 L635.0 577.6L635.0 577.3 L636.0 577.3L636.0 577.3 L637.0 577.3L637.0 577.1 L638.0 577.1L638.0 578.6 L639.0 578.6L639.0 578.7 L640.0 578.7L640.0 578.3 L641.0 578.3L641.0 578.5 L642.0 578.5L642.0 577.9 L643.0 577.9L643.0 578.6 L644.0 578.6L644.0 578.4 L645.0 578.4L645.0 577.7 L646.0 577.7L646.0 577.3 L647.0 577.3L647.0 578.2 L648.0 578.2L648.0 577.1 L649.0 577.1L649.0 575.8 L650.0 575.8L650.0 573.7 L651.0 573.7L651.0 567.4 L652.0 567.4L652.0 575.6 L653.0 575.6L653.0 575.7 L654.0 575.7L654.0 577.0 L655.0 577.0L655.0 577.2 L656.0 577.2L656.0 578.0 L657.0 578.0L657.0 578.1 L658.0 578.1L658.0 578.2 L659.0 578.2L659.0 578.3 L660.0 578.3L660.0 578.3 L661.0 578.3L661.0 579.0 L662.0 579.0L662.0 578.9 L663.0 578.9L663.0 578.4 L664.0 578.4L664.0 578.0 L665.0 578.0L665.0 578.8 L666.0 578.8L666.0 578.5 L667.0 578.5L667.0 578.5 L668.0 578.5L668.0 578.3 L669.0 578.3L669.0 579.6 L670.0 579.6L670.0 553.8 L671.0 553.8L671.0 546.7 L672.0 546.7L672.0 526.4 L673.0 526.4L673.0 540.6 L674.0 540.6L674.0 535.5 L675.0 535.5L675.0 530.3 L676.0 530.3L676.0 521.5 L677.0 521.5L677.0 516.4 L678.0 516.4L678.0 514.6 L679.0 514.6L679.0 509.3 L680.0 509.3L680.0 504.4 L681.0 504.4L681.0 506.7 L682.0 506.7L682.0 495.0 L683.0 495.0L683.0 483.3 L684.0 483.3L684.0 488.0 L685.0 488.0L685.0 495.0 L686.0 495.0L686.0 490.0 L687.0 490.0L687.0 492.6 L688.0 492.6L688.0 496.0 L689.0 496.0L689.0 497.0 L690.0 497.0L690.0 498.0 L691.0 498.0L691.0 495.0 L692.0 495.0L692.0 499.0 L693.0 499.0L693.0 504.4 L694.0 504.4L694.0 514.6 L695.0 514.6L695.0 507.2 L696.0 507.2L696.0 503.6 L697.0 503.6L697.0 498.0 L698.0 498.0L698.0 498.5 L699.0 498.5L699.0 499.0 L700.0 499.0L700.0 504.5 L701.0 504.5L701.0 507.1 L702.0 507.1L702.0 517.5 L703.0 517.5L703.0 524.0 L704.0 524.0L704.0 530.3 L705.0 530.3L705.0 528.5 L706.0 528.5L706.0 530.1 L707.0 530.1L707.0 527.9 L708.0 527.9L708.0 529.1 L709.0 529.1L709.0 517.7 L710.0 517.7L710.0 507.2 L711.0 507.2L711.0 495.0 L712.0 495.0L712.0 497.0 L713.0 497.0L713.0 507.0 L714.0 507.0L714.0 512.8 L715.0 512.8L715.0 526.1 L716.0 526.1L716.0 540.1 L717.0 540.1L717.0 535.2 L718.0 535.2L718.0 526.7 L719.0 526.7L719.0 534.6 L720.0 534.6L720.0 541.4 L721.0 541.4L721.0 538.9 L722.0 538.9L722.0 538.1 L723.0 538.1L723.0 536.3 L724.0 536.3L724.0 541.3 L725.0 541.3L725.0 542.5 L726.0 542.5L726.0 543.8 L727.0 543.8L727.0 543.2 L728.0 543.2L728.0 543.6 L729.0 543.6L729.0 542.8 L730.0 542.8L730.0 541.0 L731.0 541.0L731.0 541.6 L732.0 541.6L732.0 540.5 L733.0 540.5L733.0 532.8 L734.0 532.8L734.0 532.7 L735.0 532.7L735.0 527.7 L736.0 527.7L736.0 524.6 L737.0 524.6L737.0 523.5 L738.0 523.5L738.0 528.4 L739.0 528.4L739.0 529.7 L740.0 529.7L740.0 530.1 L741.0 530.1L741.0 532.2 L742.0 532.2L742.0 531.6 L743.0 531.6L743.0 529.5 L744.0 529.5L744.0 531.2 L745.0 531.2L745.0 532.3 L746.0 532.3L746.0 531.5 L747.0 531.5L747.0 534.1 L748.0 534.1L748.0 546.4 L749.0 546.4L749.0 557.7 L750.0 557.7L750.0 530.6 L751.0 530.6L751.0 517.7 L752.0 517.7L752.0 516.7 L753.0 516.7L753.0 524.7 L754.0 524.7L754.0 529.2 L755.0 529.2L755.0 546.8 L756.0 546.8L756.0 557.6 L757.0 557.6L757.0 549.7 L758.0 549.7L758.0 548.9 L759.0 548.9L759.0 556.0 L760.0 556.0L760.0 557.7 L761.0 557.7L761.0 552.9 L762.0 552.9L762.0 549.4 L763.0 549.4L763.0 555.8 L764.0 555.8L764.0 559.9 L765.0 559.9L765.0 563.4 L766.0 563.4L766.0 572.8 L767.0 572.8L767.0 571.9 L768.0 571.9L768.0 573.9 L769.0 573.9L769.0 577.1 L770.0 577.1L770.0 578.1 L771.0 578.1L771.0 576.3 L772.0 576.3L772.0 575.7 L773.0 575.7L773.0 578.2 L774.0 578.2L774.0 577.8 L775.0 577.8L775.0 578.0 L776.0 578.0L776.0 578.6 L777.0 578.6L777.0 578.7 L778.0 578.7L778.0 578.1 L779.0 578.1L779.0 577.2 L780.0 577.2L780.0 579.3 L781.0 579.3L781.0 577.9 L782.0 577.9L782.0 578.6 L783.0 578.6L783.0 577.8 L784.0 577.8L784.0 578.1 L785.0 578.1L785.0 577.1 L786.0 577.1L786.0 566.5 L787.0 566.5L787.0 575.3 L788.0 575.3L788.0 575.0 L789.0 575.0L789.0 573.2 L790.0 573.2L790.0 576.6 L791.0 576.6L791.0 573.5 L792.0 573.5L792.0 577.8 L793.0 577.8L793.0 577.7 L794.0 577.7L794.0 578.1 L795.0 578.1L795.0 576.3 L796.0 576.3L796.0 577.9 L797.0 577.9L797.0 578.3 L798.0 578.3L798.0 578.8 L799.0 578.8L799.0 578.1 L800.0 578.1L800.0 577.2 L801.0 577.2L801.0 578.6 L802.0 578.6L802.0 578.2 L803.0 578.2L803.0 577.9 L804.0 577.9L804.0 578.9 L805.0 578.9L805.0 578.0 L806.0 578.0L806.0 578.4 L807.0 578.4L807.0 577.1 L808.0 577.1L808.0 574.5 L809.0 574.5L809.0 573.5 L810.0 573.5L810.0 577.4 L811.0 577.4L811.0 577.8 L812.0 577.8L812.0 577.1 L813.0 577.1L813.0 578.5 L814.0 578.5L814.0 578.7 L815.0 578.7L815.0 578.9 L816.0 578.9L816.0 579.1 L817.0 579.1L817.0 578.2 L818.0 578.2L818.0 579.2 L819.0 579.2L819.0 578.1 L820.0 578.1L820.0 579.2 L821.0 579.2L821.0 579.2 L822.0 579.2L822.0 576.6 L823.0 576.6L823.0 560.2 L824.0 560.2L824.0 555.8 L825.0 555.8L825.0 550.2 L826.0 550.2L826.0 557.3 L827.0 557.3L827.0 566.8 L828.0 566.8L828.0 572.1 L829.0 572.1L829.0 565.2 L830.0 565.2L830.0 559.4 L831.0 559.4L831.0 555.4 L832.0 555.4L832.0 548.8 L833.0 548.8L833.0 544.8 L834.0 544.8L834.0 552.9 L835.0 552.9L835.0 558.0 L836.0 558.0L836.0 563.0 L837.0 563.0L837.0 563.0 L838.0 563.0L838.0 561.6 L839.0 561.6L839.0 551.6 L840.0 551.6L840.0 540.3 L841.0 540.3L841.0 546.6 L842.0 546.6L842.0 557.0 L843.0 557.0L843.0 550.8 L844.0 550.8L844.0 550.4 L845.0 550.4L845.0 551.8 L846.0 551.8L846.0 553.6 L847.0 553.6L847.0 556.2 L848.0 556.2L848.0 559.6 L849.0 559.6L849.0 557.9 L850.0 557.9L850.0 557.8 L851.0 557.8L851.0 558.2 L852.0 558.2L852.0 559.6 L853.0 559.6L853.0 561.5 L854.0 561.5L854.0 560.9 L855.0 560.9L855.0 562.4 L856.0 562.4L856.0 562.8 L857.0 562.8L857.0 562.8 L858.0 562.8L858.0 564.3 L859.0 564.3L859.0 571.8 L860.0 571.8L860.0 564.7 L861.0 564.7L861.0 562.8 L862.0 562.8L862.0 560.4 L863.0 560.4L863.0 555.1 L864.0 555.1L864.0 559.5 L865.0 559.5L865.0 561.5 L866.0 561.5L866.0 563.0 L867.0 563.0L867.0 555.5 L868.0 555.5L868.0 544.7 L869.0 544.7L869.0 550.0 L870.0 550.0L870.0 552.7 L871.0 552.7L871.0 545.1 L872.0 545.1L872.0 535.0 L873.0 535.0L873.0 531.2 L874.0 531.2L874.0 525.4 L875.0 525.4L875.0 532.2 L876.0 532.2L876.0 540.1 L877.0 540.1L877.0 546.7 L878.0 546.7L878.0 537.5 L879.0 537.5L879.0 539.2 L880.0 539.2L880.0 540.3 L881.0 540.3L881.0 538.1 L882.0 538.1L882.0 534.0 L883.0 534.0L883.0 536.7 L884.0 536.7L884.0 540.6 L885.0 540.6L885.0 546.2 L886.0 546.2L886.0 544.5 L887.0 544.5L887.0 541.9 L888.0 541.9L888.0 543.7 L889.0 543.7L889.0 544.5 L890.0 544.5L890.0 547.0 L891.0 547.0L891.0 550.3 L892.0 550.3L892.0 551.1 L893.0 551.1L893.0 541.0 L894.0 541.0L894.0 517.6 L895.0 517.6L895.0 528.4 L896.0 528.4L896.0 541.2 L897.0 541.2L897.0 540.7 L898.0 540.7L898.0 540.7 L899.0 540.7L899.0 544.1 L900.0 544.1L900.0 548.1 L901.0 548.1L901.0 550.0 L902.0 550.0L902.0 540.1 L903.0 540.1L903.0 526.9 L904.0 526.9L904.0 534.3 L905.0 534.3L905.0 550.2 L906.0 550.2L906.0 539.2 L907.0 539.2L907.0 532.5 L908.0 532.5L908.0 521.7 L909.0 521.7L909.0 533.8 L910.0 533.8L910.0 542.5 L911.0 542.5L911.0 545.6 L912.0 545.6L912.0 550.8 L913.0 550.8L913.0 554.4 L914.0 554.4L914.0 560.4 L915.0 560.4L915.0 571.4 L916.0 571.4L916.0 568.8 L917.0 568.8L917.0 574.5 L918.0 574.5L918.0 573.1 L919.0 573.1L919.0 576.9 L920.0 576.9L920.0 577.3 L921.0 577.3L921.0 577.9 L922.0 577.9L922.0 578.0 L923.0 578.0L923.0 578.7 L924.0 578.7L924.0 578.6 L925.0 578.6L925.0 578.1 L926.0 578.1L926.0 578.2 L927.0 578.2L927.0 578.5 L928.0 578.5L928.0 579.1 L929.0 579.1L929.0 576.7 L930.0 576.7L930.0 578.4 L931.0 578.4L931.0 578.8 L932.0 578.8L932.0 578.3 L933.0 578.3L933.0 578.0 L934.0 578.0L934.0 577.9 L935.0 577.9L935.0 578.1 L936.0 578.1L936.0 577.8 L937.0 577.8L937.0 577.8 L938.0 577.8L938.0 578.1 L939.0 578.1L939.0 576.0 L940.0 576.0L940.0 575.7 L941.0 575.7L941.0 568.3 L942.0 568.3L942.0 572.6 L943.0 572.6L943.0 576.6 L944.0 576.6L944.0 577.0 L945.0 577.0L945.0 575.6 L946.0 575.6L946.0 577.2 L947.0 577.2L947.0 577.7 L948.0 577.7L948.0 578.1 L949.0 578.1L949.0 576.7 L950.0 576.7L950.0 578.8 L951.0 578.8L951.0 577.0 L952.0 577.0L952.0 577.7 L953.0 577.7L953.0 576.9 L954.0 576.9L954.0 576.4 L955.0 576.4L955.0 573.6 L956.0 573.6L956.0 577.0 L957.0 577.0L957.0 575.4 L958.0 575.4L958.0 571.4 L959.0 571.4L959.0 576.0 L960.0 576.0L960.0 573.7 L961.0 573.7L961.0 576.6 L962.0 576.6L962.0 574.1 L963.0 574.1L963.0 577.4 L964.0 577.4L964.0 576.6 L965.0 576.6L965.0 576.4 L966.0 576.4L966.0 572.7 L967.0 572.7L967.0 563.1 L968.0 563.1L968.0 553.9 L969.0 553.9L969.0 546.3 L970.0 546.3L970.0 539.0 L971.0 539.0L971.0 533.9 L972.0 533.9L972.0 535.5 L973.0 535.5L973.0 529.1 L974.0 529.1L974.0 535.8 L975.0 535.8L975.0 539.2 L976.0 539.2L976.0 538.1 L977.0 538.1L977.0 534.8 L978.0 534.8L978.0 537.3 L979.0 537.3L979.0 542.6 L980.0 542.6L980.0 535.4 L981.0 535.4L981.0 544.8 L982.0 544.8L982.0 547.3 L983.0 547.3L983.0 528.0 L984.0 528.0L984.0 546.8 L985.0 546.8L985.0 549.8 L986.0 549.8L986.0 547.4 L987.0 547.4L987.0 550.3 L988.0 550.3L988.0 552.7 L989.0 552.7L989.0 555.6 L990.0 555.6L990.0 554.0 L991.0 554.0L991.0 547.2 L992.0 547.2L992.0 551.9 L993.0 551.9L993.0 553.7 L994.0 553.7L994.0 555.0 L995.0 555.0L995.0 554.6 L996.0 554.6L996.0 554.4 L997.0 554.4L997.0 554.9 L998.0 554.9L998.0 553.4 L999.0 553.4L999.0 553.4 L1000.0 553.4L1000.0 551.3 L1001.0 551.3L1001.0 554.3 L1002.0 554.3L1002.0 557.0 L1003.0 557.0L1003.0 557.4 L1004.0 557.4L1004.0 557.5 L1005.0 557.5L1005.0 557.8 L1006.0 557.8L1006.0 558.1 L1007.0 558.1L1007.0 559.1 L1008.0 559.1L1008.0 560.8 L1009.0 560.8L1009.0 561.3 L1010.0 561.3L1010.0 562.3 L1011.0 562.3L1011.0 560.2 L1012.0 560.2L1012.0 559.0 L1013.0 559.0L1013.0 559.5 L1014.0 559.5L1014.0 560.5 L1015.0 560.5L1015.0 561.2 L1016.0 561.2L1016.0 561.9 L1017.0 561.9L1017.0 558.6 L1018.0 558.6L1018.0 557.1 L1019.0 557.1L1019.0 554.0 L1020.0 554.0L1020.0 558.4 L1021.0 558.4L1021.0 558.6 L1022.0 558.6L1022.0 557.9 L1023.0 557.9L1023.0 557.6 L1024.0 557.6L1024.0 558.2 L1025.0 558.2L1025.0 556.5 L1026.0 556.5L1026.0 555.5 L1027.0 555.5L1027.0 551.1 L1028.0 551.1L1028.0 555.5 L1029.0 555.5L1029.0 555.5 L1030.0 555.5L1030.0 557.4 L1031.0 557.4L1031.0 557.6 L1032.0 557.6L1032.0 555.8 L1033.0 555.8L1033.0 557.4 L1034.0 557.4L1034.0 556.7 L1035.0 556.7L1035.0 556.0 L1036.0 556.0L1036.0 556.7 L1037.0 556.7L1037.0 556.5 L1038.0 556.5L1038.0 556.4 L1039.0 556.4L1039.0 556.9 L1040.0 556.9L1040.0 556.5 L1041.0 556.5L1041.0 556.5 L1042.0 556.5L1042.0 556.9 L1043.0 556.9L1043.0 556.4 L1044.0 556.4L1044.0 556.8 L1045.0 556.8L1045.0 555.7 L1046.0 555.7L1046.0 556.1 L1047.0 556.1L1047.0 556.8 L1048.0 556.8L1048.0 557.5 L1049.0 557.5L1049.0 557.9 L1050.0 557.9L1050.0 558.3 L1051.0 558.3L1051.0 557.0 L1052.0 557.0L1052.0 554.7 L1053.0 554.7L1053.0 554.2 L1054.0 554.2L1054.0 555.8 L1055.0 555.8L1055.0 557.5 L1056.0 557.5L1056.0 556.6 L1057.0 556.6L1057.0 553.6 L1058.0 553.6L1058.0 549.9 L1059.0 549.9L1059.0 552.5 L1060.0 552.5L1060.0 552.2 L1061.0 552.2L1061.0 551.6 L1062.0 551.6L1062.0 553.8 L1063.0 553.8L1063.0 554.9 L1064.0 554.9L1064.0 553.9 L1065.0 553.9L1065.0 553.3 L1066.0 553.3L1066.0 555.1 L1067.0 555.1L1067.0 555.0 L1068.0 555.0L1068.0 553.7 L1069.0 553.7L1069.0 556.2 L1070.0 556.2L1070.0 557.8 L1071.0 557.8L1071.0 556.4 L1072.0 556.4L1072.0 560.5 L1073.0 560.5L1073.0 564.6 L1074.0 564.6L1074.0 570.6 L1075.0 570.6L1075.0 574.1 L1076.0 574.1L1076.0 576.6 L1077.0 576.6L1077.0 577.2 L1078.0 577.2L1078.0 578.3 L1079.0 578.3L1079.0 578.1 L1080.0 578.1L1080.0 578.3 L1081.0 578.3L1081.0 578.6 L1082.0 578.6L1082.0 578.2 L1083.0 578.2L1083.0 578.9 L1084.0 578.9L1084.0 578.9 L1085.0 578.9L1085.0 577.6 L1086.0 577.6L1086.0 577.8 L1087.0 577.8L1087.0 578.8 L1088.0 578.8L1088.0 578.9 L1089.0 578.9L1089.0 579.3 L1090.0 579.3L1090.0 577.5 L1091.0 577.5L1091.0 575.3 L1092.0 575.3L1092.0 574.9 L1093.0 574.9L1093.0 574.1 L1094.0 574.1L1094.0 571.8 L1095.0 571.8L1095.0 570.8 L1096.0 570.8L1096.0 563.9 L1097.0 563.9L1097.0 570.7 L1098.0 570.7L1098.0 574.0 L1099.0 574.0L1099.0 573.8 L1100.0 573.8L1100.0 571.7 L1101.0 571.7L1101.0 570.9 L1102.0 570.9L1102.0 573.8 L1103.0 573.8L1103.0 573.8 L1104.0 573.8L1104.0 573.2 L1105.0 573.2L1105.0 573.3 L1106.0 573.3L1106.0 568.9 L1107.0 568.9L1107.0 571.5 L1108.0 571.5L1108.0 582.0 L1107.0 582.0L1107.0 582.0 L1106.0 582.0L1106.0 582.0 L1105.0 582.0L1105.0 582.0 L1104.0 582.0L1104.0 582.0 L1103.0 582.0L1103.0 582.0 L1102.0 582.0L1102.0 582.0 L1101.0 582.0L1101.0 582.0 L1100.0 582.0L1100.0 582.0 L1099.0 582.0L1099.0 581.4 L1098.0 581.4L1098.0 582.0 L1097.0 582.0L1097.0 582.0 L1096.0 582.0L1096.0 582.0 L1095.0 582.0L1095.0 581.4 L1094.0 581.4L1094.0 582.0 L1093.0 582.0L1093.0 581.4 L1092.0 581.4L1092.0 581.4 L1091.0 581.4L1091.0 582.0 L1090.0 582.0L1090.0 582.0 L1089.0 582.0L1089.0 582.0 L1088.0 582.0L1088.0 581.4 L1087.0 581.4L1087.0 581.4 L1086.0 581.4L1086.0 582.0 L1085.0 582.0L1085.0 582.0 L1084.0 582.0L1084.0 581.4 L1083.0 581.4L1083.0 582.0 L1082.0 582.0L1082.0 582.0 L1081.0 582.0L1081.0 582.0 L1080.0 582.0L1080.0 582.0 L1079.0 582.0L1079.0 582.0 L1078.0 582.0L1078.0 582.0 L1077.0 582.0L1077.0 581.4 L1076.0 581.4L1076.0 582.0 L1075.0 582.0L1075.0 582.0 L1074.0 582.0L1074.0 580.1 L1073.0 580.1L1073.0 580.2 L1072.0 580.2L1072.0 579.5 L1071.0 579.5L1071.0 579.0 L1070.0 579.0L1070.0 579.5 L1069.0 579.5L1069.0 579.5 L1068.0 579.5L1068.0 578.4 L1067.0 578.4L1067.0 579.2 L1066.0 579.2L1066.0 579.5 L1065.0 579.5L1065.0 578.8 L1064.0 578.8L1064.0 579.4 L1063.0 579.4L1063.0 578.6 L1062.0 578.6L1062.0 579.4 L1061.0 579.4L1061.0 579.6 L1060.0 579.6L1060.0 579.6 L1059.0 579.6L1059.0 579.5 L1058.0 579.5L1058.0 579.6 L1057.0 579.6L1057.0 579.1 L1056.0 579.1L1056.0 579.5 L1055.0 579.5L1055.0 579.7 L1054.0 579.7L1054.0 579.5 L1053.0 579.5L1053.0 578.6 L1052.0 578.6L1052.0 579.3 L1051.0 579.3L1051.0 579.1 L1050.0 579.1L1050.0 579.4 L1049.0 579.4L1049.0 579.6 L1048.0 579.6L1048.0 579.7 L1047.0 579.7L1047.0 579.6 L1046.0 579.6L1046.0 579.1 L1045.0 579.1L1045.0 578.8 L1044.0 578.8L1044.0 579.0 L1043.0 579.0L1043.0 579.2 L1042.0 579.2L1042.0 579.0 L1041.0 579.0L1041.0 579.3 L1040.0 579.3L1040.0 578.6 L1039.0 578.6L1039.0 579.3 L1038.0 579.3L1038.0 579.2 L1037.0 579.2L1037.0 579.3 L1036.0 579.3L1036.0 579.0 L1035.0 579.0L1035.0 579.4 L1034.0 579.4L1034.0 579.1 L1033.0 579.1L1033.0 579.5 L1032.0 579.5L1032.0 579.4 L1031.0 579.4L1031.0 579.3 L1030.0 579.3L1030.0 579.3 L1029.0 579.3L1029.0 579.1 L1028.0 579.1L1028.0 579.3 L1027.0 579.3L1027.0 579.4 L1026.0 579.4L1026.0 579.4 L1025.0 579.4L1025.0 578.9 L1024.0 578.9L1024.0 579.2 L1023.0 579.2L1023.0 579.2 L1022.0 579.2L1022.0 579.2 L1021.0 579.2L1021.0 578.9 L1020.0 578.9L1020.0 579.0 L1019.0 579.0L1019.0 579.5 L1018.0 579.5L1018.0 579.0 L1017.0 579.0L1017.0 579.3 L1016.0 579.3L1016.0 578.9 L1015.0 578.9L1015.0 579.3 L1014.0 579.3L1014.0 579.6 L1013.0 579.6L1013.0 579.0 L1012.0 579.0L1012.0 579.7 L1011.0 579.7L1011.0 579.6 L1010.0 579.6L1010.0 579.5 L1009.0 579.5L1009.0 579.3 L1008.0 579.3L1008.0 579.2 L1007.0 579.2L1007.0 579.4 L1006.0 579.4L1006.0 578.9 L1005.0 578.9L1005.0 579.3 L1004.0 579.3L1004.0 579.6 L1003.0 579.6L1003.0 579.0 L1002.0 579.0L1002.0 579.6 L1001.0 579.6L1001.0 578.8 L1000.0 578.8L1000.0 579.1 L999.0 579.1L999.0 579.3 L998.0 579.3L998.0 579.0 L997.0 579.0L997.0 579.0 L996.0 579.0L996.0 579.2 L995.0 579.2L995.0 579.0 L994.0 579.0L994.0 579.2 L993.0 579.2L993.0 579.3 L992.0 579.3L992.0 579.4 L991.0 579.4L991.0 579.4 L990.0 579.4L990.0 579.6 L989.0 579.6L989.0 579.0 L988.0 579.0L988.0 579.3 L987.0 579.3L987.0 579.6 L986.0 579.6L986.0 579.2 L985.0 579.2L985.0 579.2 L984.0 579.2L984.0 578.5 L983.0 578.5L983.0 579.4 L982.0 579.4L982.0 579.0 L981.0 579.0L981.0 579.3 L980.0 579.3L980.0 579.5 L979.0 579.5L979.0 578.4 L978.0 578.4L978.0 579.2 L977.0 579.2L977.0 579.2 L976.0 579.2L976.0 579.0 L975.0 579.0L975.0 579.1 L974.0 579.1L974.0 578.9 L973.0 578.9L973.0 579.4 L972.0 579.4L972.0 579.8 L971.0 579.8L971.0 579.6 L970.0 579.6L970.0 580.1 L969.0 580.1L969.0 580.3 L968.0 580.3L968.0 581.4 L967.0 581.4L967.0 582.0 L966.0 582.0L966.0 582.0 L965.0 582.0L965.0 581.4 L964.0 581.4L964.0 582.0 L963.0 582.0L963.0 582.0 L962.0 582.0L962.0 582.0 L961.0 582.0L961.0 582.0 L960.0 582.0L960.0 582.0 L959.0 582.0L959.0 582.0 L958.0 582.0L958.0 582.0 L957.0 582.0L957.0 581.4 L956.0 581.4L956.0 581.4 L955.0 581.4L955.0 582.0 L954.0 582.0L954.0 581.4 L953.0 581.4L953.0 582.0 L952.0 582.0L952.0 582.0 L951.0 582.0L951.0 581.4 L950.0 581.4L950.0 582.0 L949.0 582.0L949.0 582.0 L948.0 582.0L948.0 582.0 L947.0 582.0L947.0 582.0 L946.0 582.0L946.0 582.0 L945.0 582.0L945.0 582.0 L944.0 582.0L944.0 582.0 L943.0 582.0L943.0 581.4 L942.0 581.4L942.0 582.0 L941.0 582.0L941.0 582.0 L940.0 582.0L940.0 581.4 L939.0 581.4L939.0 582.0 L938.0 582.0L938.0 582.0 L937.0 582.0L937.0 582.0 L936.0 582.0L936.0 582.0 L935.0 582.0L935.0 581.4 L934.0 581.4L934.0 582.0 L933.0 582.0L933.0 581.4 L932.0 581.4L932.0 582.0 L931.0 582.0L931.0 582.0 L930.0 582.0L930.0 582.0 L929.0 582.0L929.0 581.4 L928.0 581.4L928.0 582.0 L927.0 582.0L927.0 582.0 L926.0 582.0L926.0 581.4 L925.0 581.4L925.0 582.0 L924.0 582.0L924.0 582.0 L923.0 582.0L923.0 582.0 L922.0 582.0L922.0 581.4 L921.0 581.4L921.0 582.0 L920.0 582.0L920.0 582.0 L919.0 582.0L919.0 582.0 L918.0 582.0L918.0 580.1 L917.0 580.1L917.0 579.9 L916.0 579.9L916.0 579.3 L915.0 579.3L915.0 578.7 L914.0 578.7L914.0 578.6 L913.0 578.6L913.0 578.4 L912.0 578.4L912.0 577.8 L911.0 577.8L911.0 577.4 L910.0 577.4L910.0 577.4 L909.0 577.4L909.0 576.8 L908.0 576.8L908.0 577.8 L907.0 577.8L907.0 577.8 L906.0 577.8L906.0 578.3 L905.0 578.3L905.0 578.8 L904.0 578.8L904.0 578.8 L903.0 578.8L903.0 578.2 L902.0 578.2L902.0 575.3 L901.0 575.3L901.0 571.2 L900.0 571.2L900.0 565.0 L899.0 565.0L899.0 571.2 L898.0 571.2L898.0 568.2 L897.0 568.2L897.0 562.3 L896.0 562.3L896.0 570.6 L895.0 570.6L895.0 573.1 L894.0 573.1L894.0 574.2 L893.0 574.2L893.0 574.5 L892.0 574.5L892.0 576.3 L891.0 576.3L891.0 576.0 L890.0 576.0L890.0 577.5 L889.0 577.5L889.0 578.3 L888.0 578.3L888.0 578.2 L887.0 578.2L887.0 578.3 L886.0 578.3L886.0 579.0 L885.0 579.0L885.0 578.8 L884.0 578.8L884.0 578.5 L883.0 578.5L883.0 579.3 L882.0 579.3L882.0 579.4 L881.0 579.4L881.0 578.9 L880.0 578.9L880.0 578.8 L879.0 578.8L879.0 578.1 L878.0 578.1L878.0 577.9 L877.0 577.9L877.0 578.1 L876.0 578.1L876.0 576.8 L875.0 576.8L875.0 576.5 L874.0 576.5L874.0 574.0 L873.0 574.0L873.0 575.3 L872.0 575.3L872.0 577.0 L871.0 577.0L871.0 577.1 L870.0 577.1L870.0 577.3 L869.0 577.3L869.0 578.3 L868.0 578.3L868.0 578.7 L867.0 578.7L867.0 578.0 L866.0 578.0L866.0 578.7 L865.0 578.7L865.0 578.8 L864.0 578.8L864.0 578.9 L863.0 578.9L863.0 578.3 L862.0 578.3L862.0 578.2 L861.0 578.2L861.0 578.4 L860.0 578.4L860.0 576.8 L859.0 576.8L859.0 578.3 L858.0 578.3L858.0 578.9 L857.0 578.9L857.0 578.4 L856.0 578.4L856.0 578.3 L855.0 578.3L855.0 578.5 L854.0 578.5L854.0 578.6 L853.0 578.6L853.0 578.1 L852.0 578.1L852.0 578.3 L851.0 578.3L851.0 578.5 L850.0 578.5L850.0 579.0 L849.0 579.0L849.0 578.3 L848.0 578.3L848.0 578.5 L847.0 578.5L847.0 578.5 L846.0 578.5L846.0 578.7 L845.0 578.7L845.0 578.8 L844.0 578.8L844.0 579.0 L843.0 579.0L843.0 578.4 L842.0 578.4L842.0 578.6 L841.0 578.6L841.0 579.0 L840.0 579.0L840.0 578.8 L839.0 578.8L839.0 578.4 L838.0 578.4L838.0 578.8 L837.0 578.8L837.0 578.9 L836.0 578.9L836.0 578.9 L835.0 578.9L835.0 578.1 L834.0 578.1L834.0 578.4 L833.0 578.4L833.0 578.5 L832.0 578.5L832.0 578.9 L831.0 578.9L831.0 578.6 L830.0 578.6L830.0 578.9 L829.0 578.9L829.0 578.6 L828.0 578.6L828.0 579.4 L827.0 579.4L827.0 579.2 L826.0 579.2L826.0 578.6 L825.0 578.6L825.0 579.8 L824.0 579.8L824.0 580.2 L823.0 580.2L823.0 581.4 L822.0 581.4L822.0 581.4 L821.0 581.4L821.0 581.4 L820.0 581.4L820.0 582.0 L819.0 582.0L819.0 582.0 L818.0 582.0L818.0 582.0 L817.0 582.0L817.0 582.0 L816.0 582.0L816.0 581.4 L815.0 581.4L815.0 582.0 L814.0 582.0L814.0 581.4 L813.0 581.4L813.0 582.0 L812.0 582.0L812.0 582.0 L811.0 582.0L811.0 581.4 L810.0 581.4L810.0 582.0 L809.0 582.0L809.0 582.0 L808.0 582.0L808.0 582.0 L807.0 582.0L807.0 582.0 L806.0 582.0L806.0 581.4 L805.0 581.4L805.0 581.4 L804.0 581.4L804.0 582.0 L803.0 582.0L803.0 582.0 L802.0 582.0L802.0 581.4 L801.0 581.4L801.0 581.4 L800.0 581.4L800.0 582.0 L799.0 582.0L799.0 581.4 L798.0 581.4L798.0 582.0 L797.0 582.0L797.0 582.0 L796.0 582.0L796.0 582.0 L795.0 582.0L795.0 581.4 L794.0 581.4L794.0 582.0 L793.0 582.0L793.0 582.0 L792.0 582.0L792.0 581.4 L791.0 581.4L791.0 582.0 L790.0 582.0L790.0 581.4 L789.0 581.4L789.0 581.4 L788.0 581.4L788.0 581.4 L787.0 581.4L787.0 582.0 L786.0 582.0L786.0 582.0 L785.0 582.0L785.0 582.0 L784.0 582.0L784.0 582.0 L783.0 582.0L783.0 581.4 L782.0 581.4L782.0 582.0 L781.0 582.0L781.0 582.0 L780.0 582.0L780.0 582.0 L779.0 582.0L779.0 582.0 L778.0 582.0L778.0 582.0 L777.0 582.0L777.0 582.0 L776.0 582.0L776.0 582.0 L775.0 582.0L775.0 582.0 L774.0 582.0L774.0 582.0 L773.0 582.0L773.0 582.0 L772.0 582.0L772.0 581.4 L771.0 581.4L771.0 582.0 L770.0 582.0L770.0 582.0 L769.0 582.0L769.0 582.0 L768.0 582.0L768.0 582.0 L767.0 582.0L767.0 579.9 L766.0 579.9L766.0 579.6 L765.0 579.6L765.0 577.4 L764.0 577.4L764.0 578.4 L763.0 578.4L763.0 577.6 L762.0 577.6L762.0 578.1 L761.0 578.1L761.0 577.4 L760.0 577.4L760.0 577.2 L759.0 577.2L759.0 576.3 L758.0 576.3L758.0 576.9 L757.0 576.9L757.0 575.8 L756.0 575.8L756.0 576.2 L755.0 576.2L755.0 576.1 L754.0 576.1L754.0 575.2 L753.0 575.2L753.0 576.1 L752.0 576.1L752.0 576.9 L751.0 576.9L751.0 576.3 L750.0 576.3L750.0 576.6 L749.0 576.6L749.0 576.0 L748.0 576.0L748.0 573.2 L747.0 573.2L747.0 576.7 L746.0 576.7L746.0 576.3 L745.0 576.3L745.0 576.3 L744.0 576.3L744.0 574.5 L743.0 574.5L743.0 575.5 L742.0 575.5L742.0 572.7 L741.0 572.7L741.0 576.6 L740.0 576.6L740.0 574.1 L739.0 574.1L739.0 574.7 L738.0 574.7L738.0 576.1 L737.0 576.1L737.0 573.9 L736.0 573.9L736.0 574.1 L735.0 574.1L735.0 575.4 L734.0 575.4L734.0 575.8 L733.0 575.8L733.0 576.5 L732.0 576.5L732.0 575.0 L731.0 575.0L731.0 575.6 L730.0 575.6L730.0 575.3 L729.0 575.3L729.0 575.6 L728.0 575.6L728.0 573.0 L727.0 573.0L727.0 576.3 L726.0 576.3L726.0 576.4 L725.0 576.4L725.0 576.8 L724.0 576.8L724.0 576.8 L723.0 576.8L723.0 575.1 L722.0 575.1L722.0 574.4 L721.0 574.4L721.0 575.6 L720.0 575.6L720.0 576.9 L719.0 576.9L719.0 575.8 L718.0 575.8L718.0 576.0 L717.0 576.0L717.0 576.4 L716.0 576.4L716.0 576.5 L715.0 576.5L715.0 574.3 L714.0 574.3L714.0 576.6 L713.0 576.6L713.0 577.0 L712.0 577.0L712.0 578.5 L711.0 578.5L711.0 579.9 L710.0 579.9L710.0 582.0 L709.0 582.0L709.0 581.4 L708.0 581.4L708.0 582.0 L707.0 582.0L707.0 582.0 L706.0 582.0L706.0 581.4 L705.0 581.4L705.0 576.8 L704.0 576.8L704.0 571.7 L703.0 571.7L703.0 572.1 L702.0 572.1L702.0 571.6 L701.0 571.6L701.0 568.0 L700.0 568.0L700.0 567.4 L699.0 567.4L699.0 568.1 L698.0 568.1L698.0 571.3 L697.0 571.3L697.0 568.8 L696.0 568.8L696.0 571.1 L695.0 571.1L695.0 571.1 L694.0 571.1L694.0 568.7 L693.0 568.7L693.0 566.9 L692.0 566.9L692.0 564.4 L691.0 564.4L691.0 565.6 L690.0 565.6L690.0 564.3 L689.0 564.3L689.0 568.0 L688.0 568.0L688.0 568.7 L687.0 568.7L687.0 568.2 L686.0 568.2L686.0 568.9 L685.0 568.9L685.0 571.3 L684.0 571.3L684.0 570.7 L683.0 570.7L683.0 571.6 L682.0 571.6L682.0 573.6 L681.0 573.6L681.0 573.9 L680.0 573.9L680.0 575.1 L679.0 575.1L679.0 576.0 L678.0 576.0L678.0 577.0 L677.0 577.0L677.0 577.5 L676.0 577.5L676.0 578.1 L675.0 578.1L675.0 578.7 L674.0 578.7L674.0 579.7 L673.0 579.7L673.0 580.0 L672.0 580.0L672.0 582.0 L671.0 582.0L671.0 581.4 L670.0 581.4L670.0 582.0 L669.0 582.0L669.0 582.0 L668.0 582.0L668.0 582.0 L667.0 582.0L667.0 582.0 L666.0 582.0L666.0 582.0 L665.0 582.0L665.0 582.0 L664.0 582.0L664.0 582.0 L663.0 582.0L663.0 582.0 L662.0 582.0L662.0 582.0 L661.0 582.0L661.0 582.0 L660.0 582.0L660.0 582.0 L659.0 582.0L659.0 582.0 L658.0 582.0L658.0 582.0 L657.0 582.0L657.0 582.0 L656.0 582.0L656.0 582.0 L655.0 582.0L655.0 582.0 L654.0 582.0L654.0 582.0 L653.0 582.0L653.0 582.0 L652.0 582.0L652.0 582.0 L651.0 582.0L651.0 581.4 L650.0 581.4L650.0 581.4 L649.0 581.4L649.0 582.0 L648.0 582.0L648.0 581.4 L647.0 581.4L647.0 582.0 L646.0 582.0L646.0 581.4 L645.0 581.4L645.0 581.4 L644.0 581.4L644.0 582.0 L643.0 582.0L643.0 582.0 L642.0 582.0L642.0 582.0 L641.0 582.0L641.0 582.0 L640.0 582.0L640.0 582.0 L639.0 582.0L639.0 582.0 L638.0 582.0L638.0 582.0 L637.0 582.0L637.0 582.0 L636.0 582.0L636.0 582.0 L635.0 582.0L635.0 582.0 L634.0 582.0L634.0 582.0 L633.0 582.0L633.0 581.4 L632.0 581.4L632.0 581.4 L631.0 581.4L631.0 582.0 L630.0 582.0L630.0 582.0 L629.0 582.0L629.0 582.0 L628.0 582.0L628.0 582.0 L627.0 582.0L627.0 581.4 L626.0 581.4L626.0 582.0 L625.0 582.0L625.0 582.0 L624.0 582.0L624.0 582.0 L623.0 582.0L623.0 582.0 L622.0 582.0L622.0 582.0 L621.0 582.0L621.0 582.0 L620.0 582.0L620.0 582.0 L619.0 582.0L619.0 581.4 L618.0 581.4L618.0 582.0 L617.0 582.0L617.0 582.0 L616.0 582.0L616.0 581.4 L615.0 581.4L615.0 582.0 L614.0 582.0L614.0 581.4 L613.0 581.4L613.0 582.0 L612.0 582.0L612.0 581.4 L611.0 581.4L611.0 582.0 L610.0 582.0L610.0 581.4 L609.0 581.4L609.0 582.0 L608.0 582.0L608.0 581.4 L607.0 581.4L607.0 581.4 L606.0 581.4L606.0 582.0 L605.0 582.0L605.0 582.0 L604.0 582.0L604.0 582.0 L603.0 582.0L603.0 582.0 L602.0 582.0L602.0 582.0 L601.0 582.0L601.0 582.0 L600.0 582.0L600.0 581.4 L599.0 581.4L599.0 581.4 L598.0 581.4L598.0 582.0 L597.0 582.0L597.0 582.0 L596.0 582.0L596.0 582.0 L595.0 582.0L595.0 582.0 L594.0 582.0L594.0 581.4 L593.0 581.4L593.0 582.0 L592.0 582.0L592.0 582.0 L591.0 582.0L591.0 582.0 L590.0 582.0L590.0 581.4 L589.0 581.4L589.0 581.4 L588.0 581.4L588.0 582.0 L587.0 582.0L587.0 581.4 L586.0 581.4L586.0 581.4 L585.0 581.4L585.0 582.0 L584.0 582.0L584.0 582.0 L583.0 582.0L583.0 582.0 L582.0 582.0L582.0 582.0 L581.0 582.0L581.0 581.4 L580.0 581.4L580.0 582.0 L579.0 582.0L579.0 581.4 L578.0 581.4L578.0 582.0 L577.0 582.0L577.0 582.0 L576.0 582.0L576.0 582.0 L575.0 582.0L575.0 581.4 L574.0 581.4L574.0 582.0 L573.0 582.0L573.0 582.0 L572.0 582.0L572.0 582.0 L571.0 582.0L571.0 581.4 L570.0 581.4L570.0 582.0 L569.0 582.0L569.0 582.0 L568.0 582.0L568.0 581.4 L567.0 581.4L567.0 582.0 L566.0 582.0L566.0 582.0 L565.0 582.0L565.0 582.0 L564.0 582.0L564.0 582.0 L563.0 582.0L563.0 582.0 L562.0 582.0L562.0 582.0 L561.0 582.0L561.0 581.4 L560.0 581.4L560.0 582.0 L559.0 582.0L559.0 581.4 L558.0 581.4L558.0 582.0 L557.0 582.0L557.0 582.0 L556.0 582.0L556.0 582.0 L555.0 582.0L555.0 582.0 L554.0 582.0L554.0 582.0 L553.0 582.0L553.0 582.0 L552.0 582.0L552.0 581.4 L551.0 581.4L551.0 582.0 L550.0 582.0L550.0 582.0 L549.0 582.0L549.0 581.4 L548.0 581.4L548.0 579.7 L547.0 579.7L547.0 579.9 L546.0 579.9L546.0 580.0 L545.0 580.0L545.0 579.8 L544.0 579.8L544.0 579.7 L543.0 579.7L543.0 579.2 L542.0 579.2L542.0 578.8 L541.0 578.8L541.0 578.4 L540.0 578.4L540.0 578.5 L539.0 578.5L539.0 578.1 L538.0 578.1L538.0 577.9 L537.0 577.9L537.0 578.2 L536.0 578.2L536.0 575.8 L535.0 575.8L535.0 576.9 L534.0 576.9L534.0 576.4 L533.0 576.4L533.0 576.1 L532.0 576.1L532.0 575.6 L531.0 575.6L531.0 575.0 L530.0 575.0L530.0 575.3 L529.0 575.3L529.0 571.3 L528.0 571.3L528.0 575.8 L527.0 575.8L527.0 574.2 L526.0 574.2L526.0 569.1 L525.0 569.1L525.0 564.2 L524.0 564.2L524.0 562.3 L523.0 562.3L523.0 557.3 L522.0 557.3L522.0 564.3 L521.0 564.3L521.0 577.6 L520.0 577.6L520.0 582.0 L519.0 582.0L519.0 581.4 L518.0 581.4L518.0 582.0 L517.0 582.0L517.0 579.8 L516.0 579.8L516.0 580.0 L515.0 580.0L515.0 579.6 L514.0 579.6L514.0 579.4 L513.0 579.4L513.0 578.2 L512.0 578.2L512.0 578.3 L511.0 578.3L511.0 578.4 L510.0 578.4L510.0 577.5 L509.0 577.5L509.0 576.8 L508.0 576.8L508.0 577.4 L507.0 577.4L507.0 577.3 L506.0 577.3L506.0 576.8 L505.0 576.8L505.0 575.5 L504.0 575.5L504.0 574.6 L503.0 574.6L503.0 575.9 L502.0 575.9L502.0 571.2 L501.0 571.2L501.0 572.9 L500.0 572.9L500.0 574.1 L499.0 574.1L499.0 575.6 L498.0 575.6L498.0 575.5 L497.0 575.5L497.0 576.9 L496.0 576.9L496.0 573.7 L495.0 573.7L495.0 570.3 L494.0 570.3L494.0 564.7 L493.0 564.7L493.0 563.5 L492.0 563.5L492.0 557.7 L491.0 557.7L491.0 560.1 L490.0 560.1L490.0 564.5 L489.0 564.5L489.0 560.2 L488.0 560.2L488.0 575.7 L487.0 575.7L487.0 579.8 L486.0 579.8L486.0 577.6 L485.0 577.6L485.0 574.9 L484.0 574.9L484.0 574.3 L483.0 574.3L483.0 558.9 L482.0 558.9L482.0 557.3 L481.0 557.3L481.0 560.8 L480.0 560.8L480.0 566.4 L479.0 566.4L479.0 577.0 L478.0 577.0L478.0 579.6 L477.0 579.6L477.0 582.0 L476.0 582.0L476.0 582.0 L475.0 582.0L475.0 582.0 L474.0 582.0L474.0 582.0 L473.0 582.0L473.0 581.4 L472.0 581.4L472.0 582.0 L471.0 582.0L471.0 582.0 L470.0 582.0L470.0 582.0 L469.0 582.0L469.0 582.0 L468.0 582.0L468.0 581.4 L467.0 581.4L467.0 582.0 L466.0 582.0L466.0 582.0 L465.0 582.0L465.0 582.0 L464.0 582.0L464.0 582.0 L463.0 582.0L463.0 581.4 L462.0 581.4L462.0 582.0 L461.0 582.0L461.0 582.0 L460.0 582.0L460.0 582.0 L459.0 582.0L459.0 581.4 L458.0 581.4L458.0 582.0 L457.0 582.0L457.0 581.4 L456.0 581.4L456.0 582.0 L455.0 582.0L455.0 582.0 L454.0 582.0L454.0 581.4 L453.0 581.4L453.0 582.0 L452.0 582.0L452.0 582.0 L451.0 582.0L451.0 582.0 L450.0 582.0L450.0 581.4 L449.0 581.4L449.0 582.0 L448.0 582.0L448.0 581.4 L447.0 581.4L447.0 582.0 L446.0 582.0L446.0 582.0 L445.0 582.0L445.0 582.0 L444.0 582.0L444.0 582.0 L443.0 582.0L443.0 582.0 L442.0 582.0L442.0 582.0 L441.0 582.0L441.0 582.0 L440.0 582.0L440.0 582.0 L439.0 582.0L439.0 582.0 L438.0 582.0L438.0 581.4 L437.0 581.4L437.0 581.4 L436.0 581.4L436.0 582.0 L435.0 582.0L435.0 581.4 L434.0 581.4L434.0 581.4 L433.0 581.4L433.0 582.0 L432.0 582.0L432.0 582.0 L431.0 582.0L431.0 582.0 L430.0 582.0L430.0 582.0 L429.0 582.0L429.0 581.4 L428.0 581.4L428.0 582.0 L427.0 582.0L427.0 581.4 L426.0 581.4L426.0 582.0 L425.0 582.0L425.0 582.0 L424.0 582.0L424.0 582.0 L423.0 582.0L423.0 582.0 L422.0 582.0L422.0 582.0 L421.0 582.0L421.0 581.4 L420.0 581.4L420.0 582.0 L419.0 582.0L419.0 582.0 L418.0 582.0L418.0 582.0 L417.0 582.0L417.0 581.4 L416.0 581.4L416.0 581.4 L415.0 581.4L415.0 582.0 L414.0 582.0L414.0 582.0 L413.0 582.0L413.0 582.0 L412.0 582.0L412.0 582.0 L411.0 582.0L411.0 582.0 L410.0 582.0L410.0 582.0 L409.0 582.0L409.0 581.4 L408.0 581.4L408.0 582.0 L407.0 582.0L407.0 582.0 L406.0 582.0L406.0 582.0 L405.0 582.0L405.0 581.4 L404.0 581.4L404.0 582.0 L403.0 582.0L403.0 582.0 L402.0 582.0L402.0 581.4 L401.0 581.4L401.0 582.0 L400.0 582.0L400.0 581.4 L399.0 581.4L399.0 582.0 L398.0 582.0L398.0 582.0 L397.0 582.0L397.0 582.0 L396.0 582.0L396.0 582.0 L395.0 582.0L395.0 582.0 L394.0 582.0L394.0 582.0 L393.0 582.0L393.0 582.0 L392.0 582.0L392.0 582.0 L391.0 582.0L391.0 582.0 L390.0 582.0L390.0 581.4 L389.0 581.4L389.0 581.4 L388.0 581.4L388.0 582.0 L387.0 582.0L387.0 582.0 L386.0 582.0L386.0 582.0 L385.0 582.0L385.0 582.0 L384.0 582.0L384.0 582.0 L383.0 582.0L383.0 582.0 L382.0 582.0L382.0 582.0 L381.0 582.0L381.0 582.0 L380.0 582.0L380.0 582.0 L379.0 582.0L379.0 581.4 L378.0 581.4L378.0 581.4 L377.0 581.4L377.0 582.0 L376.0 582.0L376.0 581.4 L375.0 581.4L375.0 579.9 L374.0 579.9L374.0 581.4 L373.0 581.4L373.0 579.8 L372.0 579.8L372.0 579.5 L371.0 579.5L371.0 579.0 L370.0 579.0L370.0 578.6 L369.0 578.6L369.0 578.8 L368.0 578.8L368.0 578.9 L367.0 578.9L367.0 578.4 L366.0 578.4L366.0 577.1 L365.0 577.1L365.0 577.4 L364.0 577.4L364.0 575.9 L363.0 575.9L363.0 577.1 L362.0 577.1L362.0 575.5 L361.0 575.5L361.0 576.1 L360.0 576.1L360.0 575.6 L359.0 575.6L359.0 574.0 L358.0 574.0L358.0 574.8 L357.0 574.8L357.0 574.5 L356.0 574.5L356.0 573.7 L355.0 573.7L355.0 574.0 L354.0 574.0L354.0 571.8 L353.0 571.8L353.0 570.6 L352.0 570.6L352.0 573.4 L351.0 573.4L351.0 575.9 L350.0 575.9L350.0 575.1 L349.0 575.1L349.0 573.8 L348.0 573.8L348.0 567.9 L347.0 567.9L347.0 562.9 L346.0 562.9L346.0 563.5 L345.0 563.5L345.0 568.6 L344.0 568.6L344.0 577.6 L343.0 577.6L343.0 579.7 L342.0 579.7L342.0 581.4 L341.0 581.4L341.0 577.5 L340.0 577.5L340.0 577.1 L339.0 577.1L339.0 577.3 L338.0 577.3L338.0 577.1 L337.0 577.1L337.0 576.3 L336.0 576.3L336.0 576.2 L335.0 576.2L335.0 575.9 L334.0 575.9L334.0 575.1 L333.0 575.1L333.0 575.5 L332.0 575.5L332.0 575.7 L331.0 575.7L331.0 571.5 L330.0 571.5L330.0 574.6 L329.0 574.6L329.0 575.1 L328.0 575.1L328.0 574.7 L327.0 574.7L327.0 573.3 L326.0 573.3L326.0 573.2 L325.0 573.2L325.0 576.0 L324.0 576.0L324.0 572.6 L323.0 572.6L323.0 572.0 L322.0 572.0L322.0 578.5 L321.0 578.5L321.0 576.9 L320.0 576.9L320.0 576.1 L319.0 576.1L319.0 564.0 L318.0 564.0L318.0 563.1 L317.0 563.1L317.0 566.5 L316.0 566.5L316.0 570.0 L315.0 570.0L315.0 578.4 L314.0 578.4L314.0 580.2 L313.0 580.2L313.0 582.0 L312.0 582.0L312.0 581.4 L311.0 581.4L311.0 581.4 L310.0 581.4L310.0 582.0 L309.0 582.0L309.0 582.0 L308.0 582.0L308.0 582.0 L307.0 582.0L307.0 582.0 L306.0 582.0L306.0 582.0 L305.0 582.0L305.0 582.0 L304.0 582.0L304.0 582.0 L303.0 582.0L303.0 582.0 L302.0 582.0L302.0 582.0 L301.0 582.0L301.0 582.0 L300.0 582.0L300.0 581.4 L299.0 581.4L299.0 581.4 L298.0 581.4L298.0 582.0 L297.0 582.0L297.0 581.4 L296.0 581.4L296.0 582.0 L295.0 582.0L295.0 582.0 L294.0 582.0L294.0 581.4 L293.0 581.4L293.0 581.4 L292.0 581.4L292.0 581.4 L291.0 581.4L291.0 581.4 L290.0 581.4L290.0 582.0 L289.0 582.0L289.0 582.0 L288.0 582.0L288.0 582.0 L287.0 582.0L287.0 582.0 L286.0 582.0L286.0 582.0 L285.0 582.0L285.0 582.0 L284.0 582.0L284.0 582.0 L283.0 582.0L283.0 581.4 L282.0 581.4L282.0 581.4 L281.0 581.4L281.0 582.0 L280.0 582.0L280.0 582.0 L279.0 582.0L279.0 582.0 L278.0 582.0L278.0 582.0 L277.0 582.0L277.0 581.4 L276.0 581.4L276.0 581.4 L275.0 581.4L275.0 582.0 L274.0 582.0L274.0 582.0 L273.0 582.0L273.0 581.4 L272.0 581.4L272.0 582.0 L271.0 582.0L271.0 582.0 L270.0 582.0L270.0 582.0 L269.0 582.0L269.0 582.0 L268.0 582.0L268.0 581.4 L267.0 581.4L267.0 581.4 L266.0 581.4L266.0 582.0 L265.0 582.0L265.0 582.0 L264.0 582.0L264.0 582.0 L263.0 582.0L263.0 582.0 L262.0 582.0L262.0 582.0 L261.0 582.0L261.0 581.4 L260.0 581.4L260.0 582.0 L259.0 582.0L259.0 582.0 L258.0 582.0L258.0 581.4 L257.0 581.4L257.0 581.4 L256.0 581.4L256.0 582.0 L255.0 582.0L255.0 581.4 L254.0 581.4L254.0 582.0 L253.0 582.0L253.0 581.4 L252.0 581.4L252.0 582.0 L251.0 582.0L251.0 582.0 L250.0 582.0Z" fill="#000" stroke="none"/>
</svg>
<div class="yl" style="top:50px">2</div><div class="tk" style="left:243px;top:57px"></div><div class="yl" style="top:76px">1.9</div><div class="tk" style="left:243px;top:83px"></div><div class="yl" style="top:102px">1.8</div><div class="tk" style="left:243px;top:109px"></div><div class="yl" style="top:129px">1.7</div><div class="tk" style="left:243px;top:136px"></div><div class="yl" style="top:155px">1.6</div><div class="tk" style="left:243px;top:162px"></div><div class="yl" style="top:181px">1.5</div><div class="tk" style="left:243px;top:188px"></div><div class="yl" style="top:207px">1.4</div><div class="tk" style="left:243px;top:214px"></div><div class="yl" style="top:233px">1.3</div><div class="tk" style="left:243px;top:240px"></div><div class="yl" style="top:260px">1.2</div><div class="tk" style="left:243px;top:267px"></div><div class="yl" style="top:286px">1.1</div><div class="tk" style="left:243px;top:293px"></div><div class="yl" style="top:312px">1</div><div class="tk" style="left:243px;top:319px"></div><div class="yl" style="top:338px">0.9</div><div class="tk" style="left:243px;top:345px"></div><div class="yl" style="top:364px">0.8</div><div class="tk" style="left:243px;top:371px"></div><div class="yl" style="top:391px">0.7</div><div class="tk" style="left:243px;top:398px"></div><div class="yl" style="top:417px">0.6</div><div class="tk" style="left:243px;top:424px"></div><div class="yl" style="top:443px">0.5</div><div class="tk" style="left:243px;top:450px"></div><div class="yl" style="top:469px">0.4</div><div class="tk" style="left:243px;top:476px"></div><div class="yl" style="top:495px">0.3</div><div class="tk" style="left:243px;top:502px"></div><div class="yl" style="top:522px">0.2</div><div class="tk" style="left:243px;top:529px"></div><div class="yl" style="top:548px">0.1</div><div class="tk" style="left:243px;top:555px"></div><div class="yl" style="top:574px">0</div><div class="tk" style="left:243px;top:581px"></div>
<div class="yr" style="top:50px">2</div><div class="tk" style="left:1111px;top:57px"></div><div class="yr" style="top:76px">1.9</div><div class="tk" style="left:1111px;top:83px"></div><div class="yr" style="top:102px">1.8</div><div class="tk" style="left:1111px;top:109px"></div><div class="yr" style="top:129px">1.7</div><div class="tk" style="left:1111px;top:136px"></div><div class="yr" style="top:155px">1.6</div><div class="tk" style="left:1111px;top:162px"></div><div class="yr" style="top:181px">1.5</div><div class="tk" style="left:1111px;top:188px"></div><div class="yr" style="top:207px">1.4</div><div class="tk" style="left:1111px;top:214px"></div><div class="yr" style="top:233px">1.3</div><div class="tk" style="left:1111px;top:240px"></div><div class="yr" style="top:260px">1.2</div><div class="tk" style="left:1111px;top:267px"></div><div class="yr" style="top:286px">1.1</div><div class="tk" style="left:1111px;top:293px"></div><div class="yr" style="top:312px">1</div><div class="tk" style="left:1111px;top:319px"></div><div class="yr" style="top:338px">0.9</div><div class="tk" style="left:1111px;top:345px"></div><div class="yr" style="top:364px">0.8</div><div class="tk" style="left:1111px;top:371px"></div><div class="yr" style="top:391px">0.7</div><div class="tk" style="left:1111px;top:398px"></div><div class="yr" style="top:417px">0.6</div><div class="tk" style="left:1111px;top:424px"></div><div class="yr" style="top:443px">0.5</div><div class="tk" style="left:1111px;top:450px"></div><div class="yr" style="top:469px">0.4</div><div class="tk" style="left:1111px;top:476px"></div><div class="yr" style="top:495px">0.3</div><div class="tk" style="left:1111px;top:502px"></div><div class="yr" style="top:522px">0.2</div><div class="tk" style="left:1111px;top:529px"></div><div class="yr" style="top:548px">0.1</div><div class="tk" style="left:1111px;top:555px"></div><div class="yr" style="top:574px">0</div><div class="tk" style="left:1111px;top:581px"></div>
<div class="bt" style="left:250px"></div><div class="bt" style="left:280px"></div><div class="bt" style="left:322px"></div><div class="bt" style="left:364px"></div><div class="bt" style="left:406px"></div><div class="bt" style="left:448px"></div><div class="bt" style="left:490px"></div><div class="bt" style="left:532px"></div><div class="bt" style="left:573px"></div><div class="bt" style="left:615px"></div><div class="bt" style="left:657px"></div><div class="bt" style="left:699px"></div><div class="bt" style="left:741px"></div><div class="bt" style="left:783px"></div><div class="bt" style="left:825px"></div><div class="bt" style="left:867px"></div><div class="bt" style="left:909px"></div><div class="bt" style="left:950px"></div><div class="bt" style="left:992px"></div><div class="bt" style="left:1034px"></div><div class="bt" style="left:1076px"></div><div class="bt" style="left:1108px"></div>
<div class="t" style="left:205px;top:324px;width:0;height:0"><div style="position:absolute;left:0;top:0;transform:translate(-50%,-50%) rotate(-90deg);transform-origin:center;font-size:14.8px;white-space:nowrap;left:7px">Vector Amplitude</div></div>
<div class="t" style="left:1147px;top:323px;width:0;height:0"><div style="position:absolute;top:0;left:0;transform:translate(-50%,-50%) rotate(90deg);font-size:14.8px;white-space:nowrap">Pressure (kPa)</div></div>
</body></html>
